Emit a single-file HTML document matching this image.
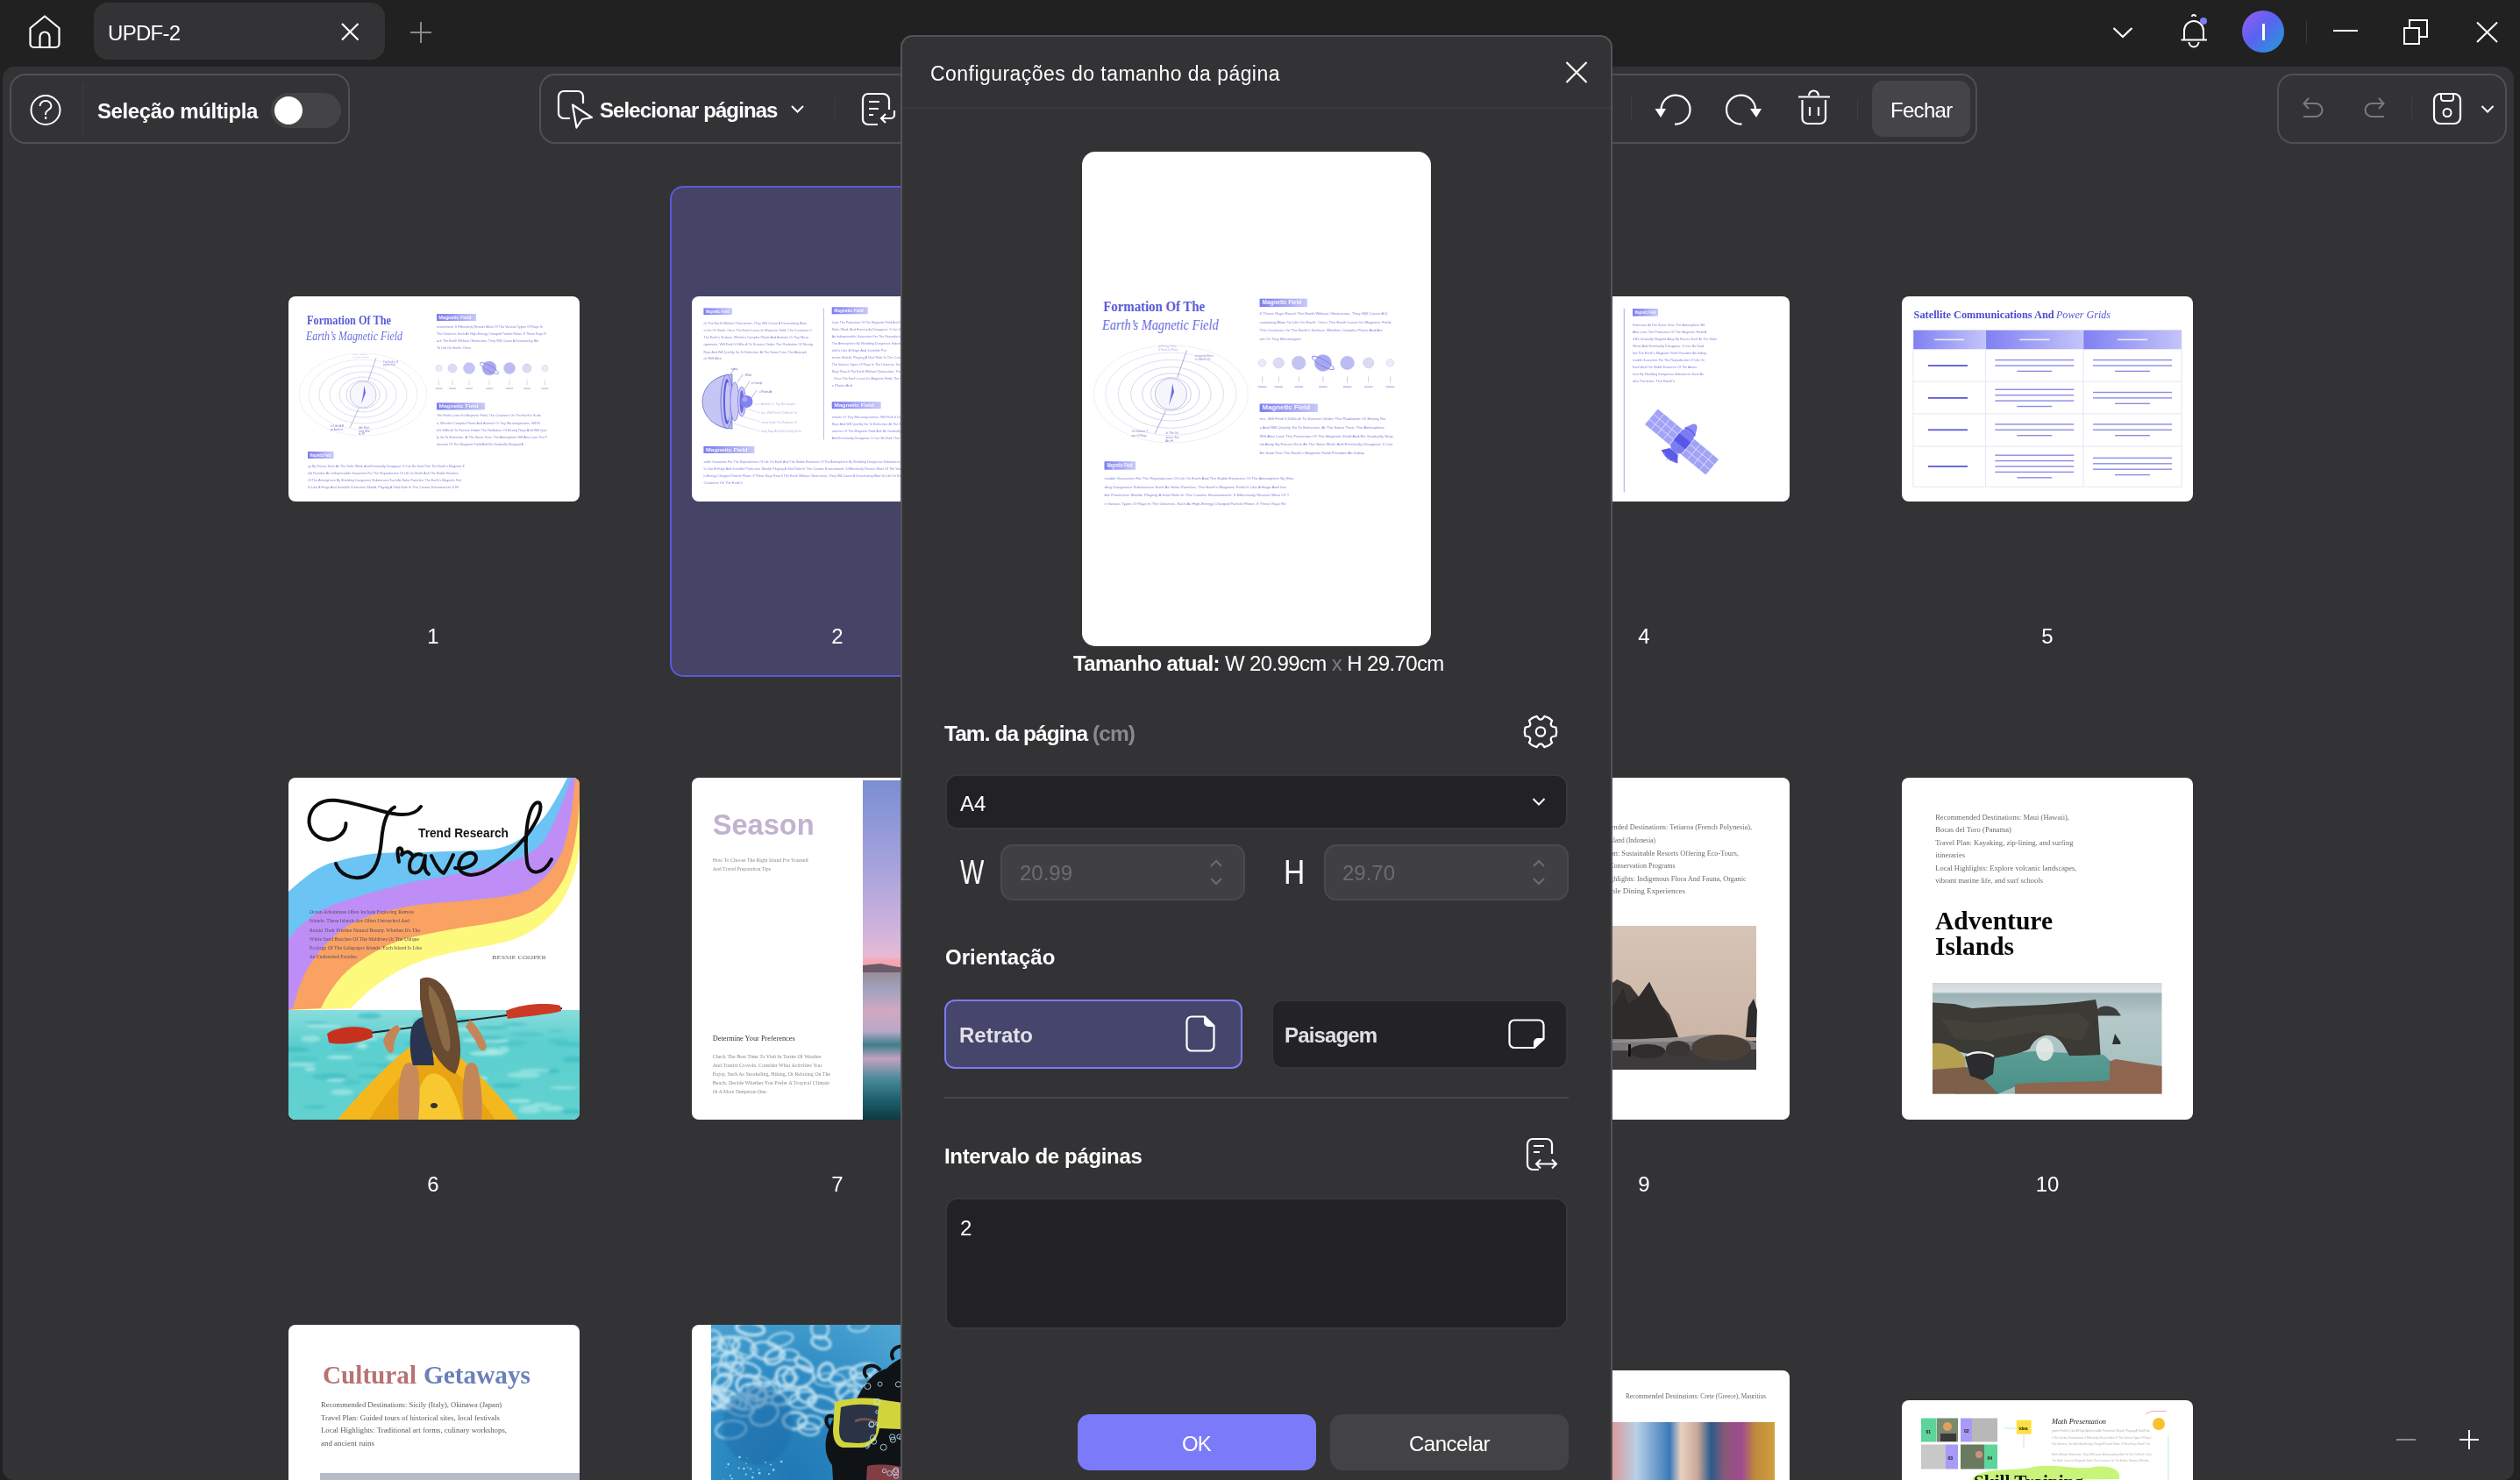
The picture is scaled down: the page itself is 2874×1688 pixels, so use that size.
<!DOCTYPE html>
<html><head><meta charset="utf-8">
<style>
*{margin:0;padding:0;box-sizing:border-box}
html,body{width:2874px;height:1688px;overflow:hidden;background:#212122;font-family:"Liberation Sans",sans-serif;color:#fff}
.a{position:absolute}
.t{position:absolute;white-space:nowrap;line-height:1;will-change:transform}
svg{position:absolute;overflow:visible}
.grp{position:absolute;border:2px solid #505052;border-radius:18px;background:#333235}
.pg{position:absolute;background:#fff;border-radius:8px;overflow:hidden}
.num{position:absolute;width:100px;text-align:center;font-size:24px;line-height:1;color:#fff}
</style></head><body>
<!-- title bar -->
<div class="a" style="left:0;top:0;width:2874px;height:76px;background:#212122"></div>
<!-- home icon -->
<svg style="left:0;top:0" width="120" height="76"><path d="M34.5 32 L51 18.5 L67.5 32 V50 a4 4 0 0 1 -4 4 H38.5 a4 4 0 0 1 -4 -4 Z" fill="none" stroke="#fff" stroke-width="2.2" stroke-linejoin="round"/><path d="M45.5 53 V42 a5.5 5.5 0 0 1 11 0 V53" fill="none" stroke="#fff" stroke-width="2.2"/></svg>
<!-- tab -->
<div class="a" style="left:107px;top:3px;width:332px;height:65px;background:#333335;border-radius:16px"></div>
<div class="t" id="tx-updf" style="left:123px;top:26px;font-size:24px;letter-spacing:-0.7px">UPDF-2</div>
<svg style="left:0;top:0" width="10" height="10"><path d="M390 27 L408.5 45.5 M408.5 27 L390 45.5" stroke="#fff" stroke-width="2.2"/></svg>
<svg style="left:0;top:0" width="10" height="10"><path d="M480 25 V49 M468 37 H492" stroke="#8a8a8a" stroke-width="2"/></svg>
<!-- right title bar -->
<svg style="left:0;top:0" width="10" height="10"><path d="M2410.5 32 L2421 42 L2431.5 32" fill="none" stroke="#fff" stroke-width="2.2"/></svg>
<svg style="left:0;top:0" width="10" height="10"><path d="M2491 45 V35 a11 11 0 0 1 22 0 V45 M2487.5 45.5 H2517 M2496.5 48 a5.5 5.5 0 0 0 11 0 M2500 19 a2 2 0 0 1 4 0" fill="none" stroke="#fff" stroke-width="2"/><circle cx="2513" cy="24" r="4" fill="#7b7bf5"/></svg>
<div class="a" style="left:2557px;top:12px;width:48px;height:48px;border-radius:50%;background:linear-gradient(135deg,#9b5cf6 0%,#5b62f0 45%,#1e9fd6 100%)"></div>
<div class="a" style="left:2580px;top:27px;width:2.5px;height:19px;background:#fff"></div>
<div class="a" style="left:2629.5px;top:24px;width:1px;height:25px;background:#3a3a3a"></div>
<svg style="left:0;top:0" width="10" height="10"><path d="M2661 35 H2689" stroke="#fff" stroke-width="2"/><path d="M2742 32 H2759 V50 H2742 Z M2748 32 V23 H2768 V42 H2759" fill="none" stroke="#fff" stroke-width="2"/><path d="M2825 25.5 L2848 48 M2848 25.5 L2825 48" stroke="#fff" stroke-width="2"/></svg>

<!-- content area -->
<div class="a" style="left:2.5px;top:76px;width:2864.5px;height:1612px;background:#333235;border-radius:14px 14px 12px 12px"></div>

<!-- toolbar group 1 -->
<div class="grp" style="left:11px;top:84px;width:388px;height:80px"></div>
<svg style="left:0;top:0" width="10" height="10"><circle cx="52" cy="125.5" r="16.5" fill="none" stroke="#fff" stroke-width="2"/><path d="M45.5 121 a6.5 6 0 0 1 13 0 c0 4 -6.5 4.5 -6.5 8.5 V131" fill="none" stroke="#fff" stroke-width="2"/><rect x="51" y="133" width="2.2" height="3" fill="#fff"/></svg>
<div class="a" style="left:93.5px;top:95px;width:1px;height:59px;background:#3e3e40"></div>
<div class="t" id="tx-sel" style="left:111px;top:115px;font-size:24px;font-weight:bold;letter-spacing:-0.4px">Seleção múltipla</div>
<div class="a" style="left:309px;top:106px;width:80px;height:40px;border-radius:20px;background:#444446"></div>
<div class="a" style="left:313px;top:110px;width:32px;height:32px;border-radius:50%;background:#fff"></div>

<!-- toolbar group 2 -->
<div class="grp" style="left:615px;top:84px;width:1640px;height:80px"></div>
<svg style="left:0;top:0" width="10" height="10"><path d="M650 135 H643 a6 6 0 0 1 -6 -6 V110 a6 6 0 0 1 6 -6 H659 a6 6 0 0 1 6 6 V118" fill="none" stroke="#fff" stroke-width="2.2"/><path d="M653 119.5 L675 134 L664 136 L657.5 145.5 Z" fill="none" stroke="#fff" stroke-width="2.2" stroke-linejoin="round"/></svg>
<div class="t" id="tx-selpg" style="left:684px;top:114px;font-size:24px;font-weight:bold;letter-spacing:-0.9px">Selecionar páginas</div>
<svg style="left:0;top:0" width="10" height="10"><path d="M903 121 L909.5 127.5 L916 121" fill="none" stroke="#fff" stroke-width="2"/></svg>
<div class="a" style="left:951.5px;top:113px;width:1px;height:23px;background:#3e3e40"></div>
<svg style="left:0;top:0" width="10" height="10"><path d="M1001 142 H990 a6 6 0 0 1 -6 -6 V113 a6 6 0 0 1 6 -6 H1007 a7 7 0 0 1 7 7 V125" fill="none" stroke="#fff" stroke-width="2.2"/><path d="M991 116 H1003 M991 124 H1002 M991 131 H996" stroke="#fff" stroke-width="2.2"/><path d="M1020 126 V131 a4 4 0 0 1 -4 4 H1005 M1010 130 L1005 135 L1010 140" fill="none" stroke="#fff" stroke-width="2.2"/></svg>
<div class="a" style="left:1859.5px;top:111px;width:1px;height:25px;background:#3e3e40"></div>
<svg style="left:0;top:0" width="10" height="10">
<path d="M1894.5 125 A16.5 16.5 0 1 1 1910 141.5" fill="none" stroke="#fff" stroke-width="2.2"/><path d="M1887.5 124 H1900 L1894 134 Z" fill="#fff"/>
<path d="M2002 125 A16.5 16.5 0 1 0 1986.5 141.5" fill="none" stroke="#fff" stroke-width="2.2"/><path d="M1996 124 H2009 L2003 134 Z" fill="#fff"/>
<path d="M2051 110.5 H2087 M2063 109 a5.5 5.5 0 0 1 11 0" fill="none" stroke="#fff" stroke-width="2.2"/><path d="M2055.5 114 V135 a6 6 0 0 0 6 6 H2076 a6 6 0 0 0 6 -6 V114" fill="none" stroke="#fff" stroke-width="2.2"/><path d="M2064 122 V132 M2074 122 V132" stroke="#fff" stroke-width="2.2"/>
</svg>
<div class="a" style="left:2118px;top:112px;width:1px;height:24px;background:#3e3e40"></div>
<div class="a" style="left:2135px;top:92px;width:112px;height:64px;border-radius:13px;background:#454547"></div>
<div class="t" id="tx-fechar" style="left:2156px;top:114px;font-size:24px;letter-spacing:-0.7px">Fechar</div>

<!-- toolbar group 3 -->
<div class="grp" style="left:2597px;top:84px;width:262px;height:80px"></div>
<svg style="left:0;top:0" width="10" height="10">
<path d="M2627 133 H2641 a7.5 7.5 0 0 0 0 -15 H2628 M2633 112 L2627.5 118 L2633 124" fill="none" stroke="#7a7a7c" stroke-width="2"/>
<path d="M2719 133 H2705 a7.5 7.5 0 0 1 0 -15 H2718 M2713 112 L2718.5 118 L2713 124" fill="none" stroke="#7a7a7c" stroke-width="2"/>
<rect x="2776" y="107" width="30" height="34" rx="7" fill="none" stroke="#fff" stroke-width="2.2"/><path d="M2784 107.5 V112 a3 3 0 0 0 3 3 H2795 a3 3 0 0 0 3 -3 V107.5" fill="none" stroke="#fff" stroke-width="2"/><circle cx="2791" cy="128.5" r="4.5" fill="none" stroke="#fff" stroke-width="2"/>
<path d="M2830.5 121 L2837 127.5 L2843.5 121" fill="none" stroke="#fff" stroke-width="2"/>
</svg>
<div class="a" style="left:2750px;top:111px;width:1px;height:24px;background:#3e3e40"></div>

<!-- zoom controls -->
<svg style="left:0;top:0" width="10" height="10"><path d="M2733 1642 H2755" stroke="#8a8a8a" stroke-width="2"/><path d="M2805 1642 H2827 M2816 1631 V1653" stroke="#fff" stroke-width="2"/></svg>

<!-- THUMBNAILS -->
<div id="thumbs">
<div class="a" style="left:764px;top:212px;width:382px;height:560px;border-radius:15px;background:#454466;border:2.5px solid #5a5ad8"></div>
<div class="pg" id="p1" style="left:329px;top:338px;width:332px;height:234px"><svg width="332" height="234" viewBox="0 0 332 234" style="left:0;top:0" ><text x="21" y="32.4" font-family="Liberation Serif" font-weight="bold" font-size="13.6" fill="#5a5ad9" textLength="96" lengthAdjust="spacingAndGlyphs">Formation Of The</text><text x="20" y="49.8" font-family="Liberation Serif" font-style="italic" font-size="13.6" fill="#6c6ce0" textLength="110" lengthAdjust="spacingAndGlyphs">Earth’s Magnetic Field</text><g fill="none" stroke="#b4b4dc" stroke-width="0.55"><ellipse cx="85" cy="112" rx="73" ry="47" opacity="0.35"/><ellipse cx="85" cy="112" rx="62" ry="40" opacity="0.5"/><ellipse cx="85" cy="112" rx="50" ry="33" opacity="0.7"/><ellipse cx="85" cy="112" rx="38" ry="26" opacity="0.8"/><ellipse cx="85" cy="112" rx="27" ry="20" opacity="0.9"/><ellipse cx="85" cy="112" rx="19" ry="16" opacity="1"/></g><circle cx="85" cy="112" r="15" fill="#f6f6fd" stroke="#a8a8dc" stroke-width="0.6"/><path d="M86.5 102 L88 110 L83 123 L85 113 Z" fill="#6a6ae0"/><path d="M91 96 L100 70 M80 128 L70 150" stroke="#8888cc" stroke-width="0.6" fill="none"/><text x="108.0" y="75.95" font-family="Liberation Sans" font-size="2.64" fill="#8888d8" opacity="1.0" textLength="17.0" lengthAdjust="spacingAndGlyphs">The Earth's M</text><text x="108.0" y="79.45" font-family="Liberation Sans" font-size="2.64" fill="#8888d8" opacity="1.0" textLength="14.0" lengthAdjust="spacingAndGlyphs">gnetic Fiel</text><text x="48.0" y="148.95" font-family="Liberation Sans" font-size="2.64" fill="#7878c8" opacity="1.0" textLength="15.0" lengthAdjust="spacingAndGlyphs">Is Like A H</text><text x="48.0" y="152.95" font-family="Liberation Sans" font-size="2.64" fill="#7878c8" opacity="1.0" textLength="14.0" lengthAdjust="spacingAndGlyphs">ge And Invi</text><text x="80.0" y="150.95" font-family="Liberation Sans" font-size="2.64" fill="#7878c8" opacity="1.0" textLength="12.0" lengthAdjust="spacingAndGlyphs">ible Prot</text><text x="80.0" y="154.95" font-family="Liberation Sans" font-size="2.64" fill="#7878c8" opacity="1.0" textLength="13.0" lengthAdjust="spacingAndGlyphs">ctive Shie</text><text x="80.0" y="158.45" font-family="Liberation Sans" font-size="2.64" fill="#7878c8" opacity="1.0" textLength="7.0" lengthAdjust="spacingAndGlyphs">d, Pl</text><text x="73.0" y="66.86" font-family="Liberation Sans" font-size="2.40" fill="#b0b0e8" opacity="1.0" textLength="17.0" lengthAdjust="spacingAndGlyphs">ying A Vital Ro</text><text x="73.0" y="70.36" font-family="Liberation Sans" font-size="2.40" fill="#b0b0e8" opacity="1.0" textLength="19.0" lengthAdjust="spacingAndGlyphs">e In The Cosmic</text><defs><linearGradient id="lg347712782"><stop offset="0" stop-color="#7c7cf0"/><stop offset="1" stop-color="#c8c8fa"/></linearGradient></defs><rect x="169" y="20" width="45" height="8" fill="url(#lg347712782)"/><text x="171.5" y="25.76" font-family="Liberation Sans" font-size="5.60" font-weight="bold" fill="#fff" opacity=".9" textLength="36.9" lengthAdjust="spacingAndGlyphs">Magnetic Field</text><text x="169.0" y="35.80" font-family="Liberation Sans" font-size="3.60" fill="#8282de" opacity="1.0" textLength="121.0" lengthAdjust="spacingAndGlyphs">nvironment. It Effectively Resists Most Of The Various Types Of Rays In</text><text x="169.0" y="44.00" font-family="Liberation Sans" font-size="3.60" fill="#8282de" opacity="1.0" textLength="125.0" lengthAdjust="spacingAndGlyphs">The Universe, Such As High-Energy Charged Particle Flows. If These Rays R</text><text x="169.0" y="51.90" font-family="Liberation Sans" font-size="3.60" fill="#8282de" opacity="1.0" textLength="116.0" lengthAdjust="spacingAndGlyphs">ach The Earth Without Obstruction, They Will Cause A Devastating Blo</text><text x="169.0" y="60.10" font-family="Liberation Sans" font-size="3.60" fill="#8282de" opacity="1.0" textLength="39.0" lengthAdjust="spacingAndGlyphs">To Life On Earth. Once</text><circle cx="171.5" cy="82" r="3.5" fill="#ececfa" stroke="#b8b8e8" stroke-width="0.4"/><rect x="171.2" y="95" width="0.6" height="6" fill="#c0c0e0"/><rect x="167.5" y="104.5" width="8" height="1.2" fill="#b8b8e4"/><circle cx="187" cy="82" r="5" fill="#dcdcf6" stroke="#b8b8e8" stroke-width="0.4"/><rect x="186.7" y="95" width="0.6" height="6" fill="#c0c0e0"/><rect x="183" y="104.5" width="8" height="1.2" fill="#b8b8e4"/><circle cx="206" cy="82" r="6.5" fill="#c4c4f4" stroke="#b8b8e8" stroke-width="0.4"/><rect x="205.7" y="95" width="0.6" height="6" fill="#c0c0e0"/><rect x="202" y="104.5" width="8" height="1.2" fill="#b8b8e4"/><circle cx="229" cy="82" r="8" fill="#a8a8f0" stroke="#b8b8e8" stroke-width="0.4"/><rect x="228.7" y="95" width="0.6" height="6" fill="#c0c0e0"/><rect x="225" y="104.5" width="8" height="1.2" fill="#b8b8e4"/><circle cx="252" cy="82" r="6.5" fill="#bcbcf2" stroke="#b8b8e8" stroke-width="0.4"/><rect x="251.7" y="95" width="0.6" height="6" fill="#c0c0e0"/><rect x="248" y="104.5" width="8" height="1.2" fill="#b8b8e4"/><circle cx="272" cy="82" r="5" fill="#dcdcf0" stroke="#b8b8e8" stroke-width="0.4"/><rect x="271.7" y="95" width="0.6" height="6" fill="#c0c0e0"/><rect x="268" y="104.5" width="8" height="1.2" fill="#b8b8e4"/><circle cx="292.5" cy="82" r="3.5" fill="#eeeefa" stroke="#b8b8e8" stroke-width="0.4"/><rect x="292.2" y="95" width="0.6" height="6" fill="#c0c0e0"/><rect x="288.5" y="104.5" width="8" height="1.2" fill="#b8b8e4"/><ellipse cx="229" cy="82" rx="12" ry="3" fill="none" stroke="#7c7ce8" stroke-width="0.7" transform="rotate(30 229 82)"/><defs><linearGradient id="lg161973069"><stop offset="0" stop-color="#7c7cf0"/><stop offset="1" stop-color="#c8c8fa"/></linearGradient></defs><rect x="169" y="121.4" width="55" height="8" fill="url(#lg161973069)"/><text x="171.5" y="127.16" font-family="Liberation Sans" font-size="5.60" font-weight="bold" fill="#fff" opacity=".9" textLength="45.1" lengthAdjust="spacingAndGlyphs">Magnetic Field</text><text x="169.0" y="137.30" font-family="Liberation Sans" font-size="3.60" fill="#8282de" opacity="1.0" textLength="119.0" lengthAdjust="spacingAndGlyphs">The Earth Loses Its Magnetic Field, The Creatures On The Earth's Surfa</text><text x="169.0" y="145.80" font-family="Liberation Sans" font-size="3.60" fill="#8282de" opacity="1.0" textLength="118.0" lengthAdjust="spacingAndGlyphs">e, Whether Complex Plants And Animals Or Tiny Microorganisms, Will Fi</text><text x="169.0" y="153.90" font-family="Liberation Sans" font-size="3.60" fill="#8282de" opacity="1.0" textLength="126.0" lengthAdjust="spacingAndGlyphs">d It Difficult To Survive Under The Radiation Of Strong Rays And Will Quic</text><text x="169.0" y="161.90" font-family="Liberation Sans" font-size="3.60" fill="#8282de" opacity="1.0" textLength="126.0" lengthAdjust="spacingAndGlyphs">ly Go To Extinction. At The Same Time, The Atmosphere Will Also Lose The P</text><text x="169.0" y="169.80" font-family="Liberation Sans" font-size="3.60" fill="#8282de" opacity="1.0" textLength="99.0" lengthAdjust="spacingAndGlyphs">otection Of The Magnetic Field And Be Gradually Stripped A</text><defs><linearGradient id="lg423938499"><stop offset="0" stop-color="#7c7cf0"/><stop offset="1" stop-color="#c8c8fa"/></linearGradient></defs><rect x="22" y="177" width="29.5" height="8" fill="url(#lg423938499)"/><text x="24.5" y="182.76" font-family="Liberation Sans" font-size="5.60" font-weight="bold" fill="#fff" opacity=".9" textLength="24.2" lengthAdjust="spacingAndGlyphs">Magnetic Field</text><text x="22.0" y="194.80" font-family="Liberation Sans" font-size="3.60" fill="#8282de" opacity="1.0" textLength="179.0" lengthAdjust="spacingAndGlyphs">ay By Forces Such As The Solar Wind, And Eventually Disappear. It Can Be Said That The Earth's Magnetic F</text><text x="22.0" y="202.90" font-family="Liberation Sans" font-size="3.60" fill="#8282de" opacity="1.0" textLength="172.0" lengthAdjust="spacingAndGlyphs">eld Provides An Indispensable Guarantee For The Reproduction Of Life On Earth And The Stable Existenc</text><text x="22.0" y="210.90" font-family="Liberation Sans" font-size="3.60" fill="#8282de" opacity="1.0" textLength="175.0" lengthAdjust="spacingAndGlyphs">Of The Atmosphere By Shielding Dangerous Substances Such As Solar Particles. The Earth's Magnetic Fiel</text><text x="22.0" y="219.00" font-family="Liberation Sans" font-size="3.60" fill="#8282de" opacity="1.0" textLength="172.0" lengthAdjust="spacingAndGlyphs">Is Like A Huge And Invisible Protective Shield, Playing A Vital Role In The Cosmic Environment. It Ef</text></svg></div>
<div class="pg" id="p2" style="left:789px;top:338px;width:332px;height:234px"><svg width="332" height="234" viewBox="0 0 332 234" style="left:0;top:0" ><defs><linearGradient id="lg881836553"><stop offset="0" stop-color="#7c7cf0"/><stop offset="1" stop-color="#c8c8fa"/></linearGradient></defs><rect x="13.4" y="13.4" width="32.4" height="7.6" fill="url(#lg881836553)"/><text x="15.9" y="18.87" font-family="Liberation Sans" font-size="5.32" font-weight="bold" fill="#fff" opacity=".9" textLength="26.6" lengthAdjust="spacingAndGlyphs">Magnetic Field</text><text x="13.4" y="32.10" font-family="Liberation Sans" font-size="3.60" fill="#8484e0" opacity="1.0" textLength="117.6" lengthAdjust="spacingAndGlyphs">ch The Earth Without Obstruction, They Will Cause A Devastating Blow</text><text x="13.4" y="40.00" font-family="Liberation Sans" font-size="3.60" fill="#8484e0" opacity="1.0" textLength="123.6" lengthAdjust="spacingAndGlyphs">o Life On Earth. Once The Earth Loses Its Magnetic Field, The Creatures O</text><text x="13.4" y="48.30" font-family="Liberation Sans" font-size="3.60" fill="#8484e0" opacity="1.0" textLength="119.6" lengthAdjust="spacingAndGlyphs">The Earth's Surface, Whether Complex Plants And Animals Or Tiny Micro</text><text x="13.4" y="56.30" font-family="Liberation Sans" font-size="3.60" fill="#8484e0" opacity="1.0" textLength="124.6" lengthAdjust="spacingAndGlyphs">rganisms, Will Find It Difficult To Survive Under The Radiation Of Strong</text><text x="13.4" y="64.50" font-family="Liberation Sans" font-size="3.60" fill="#8484e0" opacity="1.0" textLength="117.6" lengthAdjust="spacingAndGlyphs">Rays And Will Quickly Go To Extinction. At The Same Time, The Atmosph</text><text x="13.4" y="72.40" font-family="Liberation Sans" font-size="3.60" fill="#8484e0" opacity="1.0" textLength="20.6" lengthAdjust="spacingAndGlyphs">re Will Also</text><rect x="150.2" y="13.4" width="0.6" height="150" fill="#9a9ad8"/><defs><linearGradient id="lg575398922"><stop offset="0" stop-color="#7c7cf0"/><stop offset="1" stop-color="#c8c8fa"/></linearGradient></defs><rect x="159.7" y="12.3" width="41" height="8" fill="url(#lg575398922)"/><text x="162.2" y="18.06" font-family="Liberation Sans" font-size="5.60" font-weight="bold" fill="#fff" opacity=".9" textLength="33.6" lengthAdjust="spacingAndGlyphs">Magnetic Field</text><text x="159.7" y="31.00" font-family="Liberation Sans" font-size="3.60" fill="#8484e0" opacity="1.0" textLength="158.3" lengthAdjust="spacingAndGlyphs">Lose The Protection Of The Magnetic Field And Be Gradually Stripped Away By Forces Such As Th</text><text x="159.7" y="39.10" font-family="Liberation Sans" font-size="3.60" fill="#8484e0" opacity="1.0" textLength="160.3" lengthAdjust="spacingAndGlyphs">Solar Wind, And Eventually Disappear. It Can Be Said That The Earth's Magnetic Field Provides</text><text x="159.7" y="47.10" font-family="Liberation Sans" font-size="3.60" fill="#8484e0" opacity="1.0" textLength="156.3" lengthAdjust="spacingAndGlyphs">An Indispensable Guarantee For The Reproduction Of Life On Earth And The Stable Existence Of</text><text x="159.7" y="55.10" font-family="Liberation Sans" font-size="3.60" fill="#8484e0" opacity="1.0" textLength="162.3" lengthAdjust="spacingAndGlyphs">The Atmosphere By Shielding Dangerous Substances Such As Solar Particles. The Earth's Magnetic</text><text x="159.7" y="63.20" font-family="Liberation Sans" font-size="3.60" fill="#8484e0" opacity="1.0" textLength="62.3" lengthAdjust="spacingAndGlyphs">eld Is Like A Huge And Invisible Pro</text><text x="159.7" y="71.20" font-family="Liberation Sans" font-size="3.60" fill="#8484e0" opacity="1.0" textLength="158.3" lengthAdjust="spacingAndGlyphs">ective Shield, Playing A Vital Role In The Cosmic Environment. It Effectively Resists Most Of</text><text x="159.7" y="79.20" font-family="Liberation Sans" font-size="3.60" fill="#8484e0" opacity="1.0" textLength="161.3" lengthAdjust="spacingAndGlyphs">The Various Types Of Rays In The Universe, Such As High-Energy Charged Particle Flows. If These</text><text x="159.7" y="87.30" font-family="Liberation Sans" font-size="3.60" fill="#8484e0" opacity="1.0" textLength="157.3" lengthAdjust="spacingAndGlyphs">Rays Reach The Earth Without Obstruction, They Will Cause A Devastating Blow To Life On Eart</text><text x="159.7" y="95.30" font-family="Liberation Sans" font-size="3.60" fill="#8484e0" opacity="1.0" textLength="160.3" lengthAdjust="spacingAndGlyphs">. Once The Earth Loses Its Magnetic Field, The Creatures On The Earth's Surface, Whether Compl</text><text x="159.7" y="103.30" font-family="Liberation Sans" font-size="3.60" fill="#8484e0" opacity="1.0" textLength="23.3" lengthAdjust="spacingAndGlyphs">x Plants And</text><defs><linearGradient id="lg101071364"><stop offset="0" stop-color="#7c7cf0"/><stop offset="1" stop-color="#c8c8fa"/></linearGradient></defs><rect x="159.7" y="120.2" width="56" height="8" fill="url(#lg101071364)"/><text x="162.2" y="125.96" font-family="Liberation Sans" font-size="5.60" font-weight="bold" fill="#fff" opacity=".9" textLength="45.9" lengthAdjust="spacingAndGlyphs">Magnetic Field</text><text x="159.7" y="138.80" font-family="Liberation Sans" font-size="3.60" fill="#8484e0" opacity="1.0" textLength="160.3" lengthAdjust="spacingAndGlyphs">nimals Or Tiny Microorganisms, Will Find It Difficult To Survive Under The Radiation Of Strong</text><text x="159.7" y="146.80" font-family="Liberation Sans" font-size="3.60" fill="#8484e0" opacity="1.0" textLength="158.3" lengthAdjust="spacingAndGlyphs">Rays And Will Quickly Go To Extinction. At The Same Time, The Atmosphere Will Also Lose The P</text><text x="159.7" y="155.00" font-family="Liberation Sans" font-size="3.60" fill="#8484e0" opacity="1.0" textLength="162.3" lengthAdjust="spacingAndGlyphs">otection Of The Magnetic Field And Be Gradually Stripped Away By Forces Such As The Solar Wind,</text><text x="159.7" y="162.90" font-family="Liberation Sans" font-size="3.60" fill="#8484e0" opacity="1.0" textLength="156.3" lengthAdjust="spacingAndGlyphs">And Eventually Disappear. It Can Be Said That The Earth's Magnetic Field Provides An Indispe</text><defs><linearGradient id="lg392655486"><stop offset="0" stop-color="#7c7cf0"/><stop offset="1" stop-color="#c8c8fa"/></linearGradient></defs><rect x="13.4" y="171" width="58" height="8" fill="url(#lg392655486)"/><text x="15.9" y="176.76" font-family="Liberation Sans" font-size="5.60" font-weight="bold" fill="#fff" opacity=".9" textLength="47.6" lengthAdjust="spacingAndGlyphs">Magnetic Field</text><text x="13.4" y="189.80" font-family="Liberation Sans" font-size="3.60" fill="#8484e0" opacity="1.0" textLength="304.6" lengthAdjust="spacingAndGlyphs">sable Guarantee For The Reproduction Of Life On Earth And The Stable Existence Of The Atmosphere By Shielding Dangerous Substances Such As Solar Particles. The Earth's Magnetic Fie</text><text x="13.4" y="197.80" font-family="Liberation Sans" font-size="3.60" fill="#8484e0" opacity="1.0" textLength="306.6" lengthAdjust="spacingAndGlyphs">Is Like A Huge And Invisible Protective Shield, Playing A Vital Role In The Cosmic Environment. It Effectively Resists Most Of The Various Types Of Rays In The Universe, Such As Hi</text><text x="13.4" y="205.90" font-family="Liberation Sans" font-size="3.60" fill="#8484e0" opacity="1.0" textLength="304.6" lengthAdjust="spacingAndGlyphs">h-Energy Charged Particle Flows. If These Rays Reach The Earth Without Obstruction, They Will Cause A Devastating Blow To Life On Earth. Once The Earth Loses Its Magnetic Field, Th</text><text x="13.4" y="214.00" font-family="Liberation Sans" font-size="3.60" fill="#8484e0" opacity="1.0" textLength="44.6" lengthAdjust="spacingAndGlyphs">Creatures On The Earth's</text><path d="M46 89 A34 31 0 0 0 46 151 Z" fill="#c6c6f4" stroke="#5656c8" stroke-width="0.7"/><ellipse cx="40" cy="120" rx="7" ry="31" fill="#bdbdf2" stroke="#5a5ad0" stroke-width="0.7"/><ellipse cx="40" cy="120" rx="4" ry="26" fill="#6060e0"/><ellipse cx="41" cy="120" rx="3" ry="22" fill="#c8c8f6"/><ellipse cx="49" cy="120" rx="5" ry="22" fill="#cacaf6" stroke="#5a5ad0" stroke-width="0.6"/><ellipse cx="57" cy="120" rx="4.5" ry="17" fill="#d0d0f8" stroke="#5a5ad0" stroke-width="0.6"/><ellipse cx="57" cy="120" rx="2.5" ry="13" fill="#7070e8"/><circle cx="62.5" cy="120" r="7" fill="#8282f2"/><circle cx="60.5" cy="117.5" r="3" fill="#a6a6f8"/><path d="M44 89 L49 82 M52 98 L58 89 M60 106 L66 97 M68 116 L74 107" stroke="#7070b0" stroke-width="0.5"/><text x="45.0" y="84.04" font-family="Liberation Sans" font-size="2.88" fill="#6c6cc0" opacity="1.0" textLength="8.0" lengthAdjust="spacingAndGlyphs">urfac</text><text x="59.0" y="90.54" font-family="Liberation Sans" font-size="2.88" fill="#6c6cc0" opacity="1.0" textLength="9.0" lengthAdjust="spacingAndGlyphs">, Whet</text><text x="68.0" y="99.54" font-family="Liberation Sans" font-size="2.88" fill="#6c6cc0" opacity="1.0" textLength="12.0" lengthAdjust="spacingAndGlyphs">er Compl</text><text x="77.0" y="109.54" font-family="Liberation Sans" font-size="2.88" fill="#6c6cc0" opacity="1.0" textLength="15.0" lengthAdjust="spacingAndGlyphs">x Plants An</text><path d="M70 123 L78 123 M62 128 L78 133 M54 136 L78 143 M48 145 L78 154" stroke="#b0b0d8" stroke-width="0.4"/><text x="79.0" y="123.54" font-family="Liberation Sans" font-size="2.88" fill="#b4b4e4" opacity="1.0" textLength="39.0" lengthAdjust="spacingAndGlyphs">Animals Or Tiny Microorgani</text><text x="79.0" y="134.04" font-family="Liberation Sans" font-size="2.88" fill="#b4b4e4" opacity="1.0" textLength="41.0" lengthAdjust="spacingAndGlyphs">ms, Will Find It Difficult To</text><text x="79.0" y="144.54" font-family="Liberation Sans" font-size="2.88" fill="#b4b4e4" opacity="1.0" textLength="41.0" lengthAdjust="spacingAndGlyphs">urvive Under The Radiation Of</text><text x="79.0" y="155.04" font-family="Liberation Sans" font-size="2.88" fill="#b4b4e4" opacity="1.0" textLength="46.0" lengthAdjust="spacingAndGlyphs">trong Rays And Will Quickly Go To</text></svg></div>
<div class="pg" id="p4" style="left:1709px;top:338px;width:332px;height:234px"><svg width="332" height="234" viewBox="0 0 332 234" style="left:0;top:0" ><rect x="142.8" y="14" width="0.8" height="209.5" fill="#9090e0"/><defs><linearGradient id="lg625763863"><stop offset="0" stop-color="#7c7cf0"/><stop offset="1" stop-color="#c8c8fa"/></linearGradient></defs><rect x="153" y="14" width="29" height="8.6" fill="url(#lg625763863)"/><text x="155.5" y="20.19" font-family="Liberation Sans" font-size="6.02" font-weight="bold" fill="#fff" opacity=".9" textLength="23.8" lengthAdjust="spacingAndGlyphs">Magnetic Field</text><text x="153.0" y="34.30" font-family="Liberation Sans" font-size="3.60" fill="#8282de" opacity="1.0" textLength="82.0" lengthAdjust="spacingAndGlyphs">Extinction. At The Same Time, The Atmosphere Wil</text><text x="153.0" y="42.30" font-family="Liberation Sans" font-size="3.60" fill="#8282de" opacity="1.0" textLength="84.0" lengthAdjust="spacingAndGlyphs">Also Lose The Protection Of The Magnetic Field A</text><text x="153.0" y="50.30" font-family="Liberation Sans" font-size="3.60" fill="#8282de" opacity="1.0" textLength="96.0" lengthAdjust="spacingAndGlyphs">d Be Gradually Stripped Away By Forces Such As The Solar</text><text x="153.0" y="58.30" font-family="Liberation Sans" font-size="3.60" fill="#8282de" opacity="1.0" textLength="81.0" lengthAdjust="spacingAndGlyphs">Wind, And Eventually Disappear. It Can Be Said</text><text x="153.0" y="66.30" font-family="Liberation Sans" font-size="3.60" fill="#8282de" opacity="1.0" textLength="84.0" lengthAdjust="spacingAndGlyphs">hat The Earth's Magnetic Field Provides An Indisp</text><text x="153.0" y="74.30" font-family="Liberation Sans" font-size="3.60" fill="#8282de" opacity="1.0" textLength="82.0" lengthAdjust="spacingAndGlyphs">nsable Guarantee For The Reproduction Of Life On</text><text x="153.0" y="82.30" font-family="Liberation Sans" font-size="3.60" fill="#8282de" opacity="1.0" textLength="73.0" lengthAdjust="spacingAndGlyphs">Earth And The Stable Existence Of The Atmos</text><text x="153.0" y="90.30" font-family="Liberation Sans" font-size="3.60" fill="#8282de" opacity="1.0" textLength="81.0" lengthAdjust="spacingAndGlyphs">here By Shielding Dangerous Substances Such As</text><text x="153.0" y="98.30" font-family="Liberation Sans" font-size="3.60" fill="#8282de" opacity="1.0" textLength="48.0" lengthAdjust="spacingAndGlyphs">olar Particles. The Earth's</text><g transform="translate(209 166) rotate(39.7)"><rect x="-45" y="-11.5" width="90" height="23" fill="#a2a2f6"/><path d="M-36 -11.5 V11.5 M-27 -11.5 V11.5 M-18 -11.5 V11.5 M-9 -11.5 V11.5 M0 -11.5 V11.5 M9 -11.5 V11.5 M18 -11.5 V11.5 M27 -11.5 V11.5 M36 -11.5 V11.5 M-45 -3.8 H45 M-45 3.8 H45" stroke="#e4e4fd" stroke-width="0.8"/></g><g transform="translate(209 166) rotate(-50.3)"><rect x="-14" y="-8" width="30" height="16" rx="6" fill="#7c7cf2"/><rect x="-4" y="-8.5" width="10" height="17" fill="#5858e6"/><path d="M14 -8 L24 -3 Q27 0 24 3 L14 8 Z" fill="#8a8af4"/><path d="M15 -7 Q18 0 15 7" stroke="#5a5ae6" stroke-width="1.4" fill="none"/><path d="M-14 -6 L-22 -12 Q-28 0 -22 12 L-14 6 Z" fill="#5c5ce8"/><path d="M-22 -8 L-25 -3 M-22 8 L-25 3 M-23 0 H-27" stroke="#8c8cf4" stroke-width="0.8"/></g></svg></div>
<div class="pg" id="p5" style="left:2169px;top:338px;width:332px;height:234px"><svg width="332" height="234" viewBox="0 0 332 234" style="left:0;top:0" ><text x="13.6" y="24.7" font-family="Liberation Serif" font-weight="bold" font-size="12.8" fill="#4c4cd4" textLength="160" lengthAdjust="spacingAndGlyphs">Satellite Communications And</text><text x="176" y="24.7" font-family="Liberation Serif" font-style="italic" font-size="12.8" fill="#5656d8" textLength="62" lengthAdjust="spacingAndGlyphs">Power Grids</text><defs><linearGradient id="th"><stop offset="0" stop-color="#8080f2"/><stop offset="1" stop-color="#c4c4fa"/></linearGradient></defs><rect x="13" y="38.5" width="82.6" height="21.8" fill="url(#th)"/><rect x="37.3" y="48.6" width="34" height="1.6" fill="#fff" opacity=".8"/><rect x="95.6" y="38.5" width="111.4" height="21.8" fill="url(#th)"/><rect x="134.3" y="48.6" width="34" height="1.6" fill="#fff" opacity=".8"/><rect x="207" y="38.5" width="112" height="21.8" fill="url(#th)"/><rect x="246.0" y="48.6" width="34" height="1.6" fill="#fff" opacity=".8"/><g stroke="#d4d4f0" stroke-width="0.6" fill="none"><rect x="13" y="38.5" width="306" height="178.6"/><path d="M95.6 38.5 V217 M207 38.5 V217 M13 97.1 H319 M13 133.9 H319 M13 171.1 H319"/></g><rect x="30" y="78.1" width="45" height="1.8" fill="#5a5ad8"/><rect x="106.30000000000001" y="71.89999999999999" width="90" height="1.4" fill="#8c8ce6"/><rect x="106.30000000000001" y="78.3" width="90" height="1.4" fill="#8c8ce6"/><rect x="131.3" y="84.7" width="40" height="1.4" fill="#8c8ce6"/><rect x="218.0" y="71.89999999999999" width="90" height="1.4" fill="#8c8ce6"/><rect x="218.0" y="78.3" width="90" height="1.4" fill="#8c8ce6"/><rect x="243.0" y="84.7" width="40" height="1.4" fill="#8c8ce6"/><rect x="30" y="115.0" width="45" height="1.8" fill="#5a5ad8"/><rect x="106.30000000000001" y="105.60000000000001" width="90" height="1.4" fill="#8c8ce6"/><rect x="106.30000000000001" y="112.0" width="90" height="1.4" fill="#8c8ce6"/><rect x="106.30000000000001" y="118.4" width="90" height="1.4" fill="#8c8ce6"/><rect x="131.3" y="124.8" width="40" height="1.4" fill="#8c8ce6"/><rect x="218.0" y="108.8" width="90" height="1.4" fill="#8c8ce6"/><rect x="218.0" y="115.2" width="90" height="1.4" fill="#8c8ce6"/><rect x="243.0" y="121.60000000000001" width="40" height="1.4" fill="#8c8ce6"/><rect x="30" y="151.4" width="45" height="1.8" fill="#5a5ad8"/><rect x="106.30000000000001" y="145.20000000000002" width="90" height="1.4" fill="#8c8ce6"/><rect x="106.30000000000001" y="151.60000000000002" width="90" height="1.4" fill="#8c8ce6"/><rect x="131.3" y="158.00000000000003" width="40" height="1.4" fill="#8c8ce6"/><rect x="218.0" y="145.20000000000002" width="90" height="1.4" fill="#8c8ce6"/><rect x="218.0" y="151.60000000000002" width="90" height="1.4" fill="#8c8ce6"/><rect x="243.0" y="158.00000000000003" width="40" height="1.4" fill="#8c8ce6"/><rect x="30" y="193.1" width="45" height="1.8" fill="#5a5ad8"/><rect x="106.30000000000001" y="180.5" width="90" height="1.4" fill="#8c8ce6"/><rect x="106.30000000000001" y="186.9" width="90" height="1.4" fill="#8c8ce6"/><rect x="106.30000000000001" y="193.3" width="90" height="1.4" fill="#8c8ce6"/><rect x="106.30000000000001" y="199.70000000000002" width="90" height="1.4" fill="#8c8ce6"/><rect x="131.3" y="206.10000000000002" width="40" height="1.4" fill="#8c8ce6"/><rect x="218.0" y="183.70000000000002" width="90" height="1.4" fill="#8c8ce6"/><rect x="218.0" y="190.10000000000002" width="90" height="1.4" fill="#8c8ce6"/><rect x="218.0" y="196.5" width="90" height="1.4" fill="#8c8ce6"/><rect x="243.0" y="202.9" width="40" height="1.4" fill="#8c8ce6"/></svg></div>
<div class="num" style="left:444px;top:714px">1</div>
<div class="num" style="left:905px;top:714px">2</div>
<div class="num" style="left:1825px;top:714px">4</div>
<div class="num" style="left:2285px;top:714px">5</div>
<div class="pg" id="p6" style="left:329px;top:887px;width:332px;height:390px"><svg width="332" height="390" viewBox="0 0 332 390" style="left:0;top:0" ><path d="M0 130 C20 112 35 100 53 96 C75 90 90 87 105 86 C140 85 165 85 184 84 C205 83 225 83 237 81 C252 78 262 72 270 66 C282 56 290 48 296 39 C305 25 312 12 318 0 L332 0 L332 265 L0 265 Z" fill="#6cc4f4"/><path d="M0 184 C15 165 35 150 53 144 C90 132 130 120 158 116 C195 110 222 104 237 100 C250 96 258 94 263 92 C275 86 284 80 290 74 C300 60 312 30 323 0 L332 0 L332 265 L0 265 Z" fill="#be8ef6"/><path d="M5 263 C10 245 16 225 26 211 C40 190 58 172 79 163 C105 152 135 146 158 144 C200 140 240 138 263 132 C285 125 300 108 311 87 C318 70 324 40 327 0 L332 0 L332 265 L0 265 Z" fill="#f9a262"/><path d="M37 263 C48 240 62 222 79 211 C95 200 112 190 132 184 C160 177 190 172 211 169 C240 165 262 160 277 153 C295 144 308 128 316 111 C325 90 330 60 332 26 L332 0 L332 265 L0 265 Z" fill="#fdf97c"/><path d="M71 263 C85 248 100 235 119 224 C138 213 160 205 184 200 C215 193 245 190 263 182 C285 173 300 158 311 142 C322 125 330 100 332 79 L332 0 L332 265 L0 265 Z" fill="#ffffff"/><path d="M332 79 L332 265 L71 265 Z" fill="#fff" opacity="0"/><defs><linearGradient id="sea6" x1="0" y1="0" x2="0" y2="1"><stop offset="0" stop-color="#8adcdc"/><stop offset=".3" stop-color="#5ccfd0"/><stop offset="1" stop-color="#62d2cf"/></linearGradient><filter id="bl6"><feGaussianBlur stdDeviation="1.5"/></filter><clipPath id="cp6"><rect x="0" y="265" width="332" height="125"/></clipPath></defs><rect x="0" y="265" width="332" height="125" fill="url(#sea6)"/><g clip-path="url(#cp6)"><g filter="url(#bl6)"><ellipse cx="263.4" cy="368.6" rx="12.8" ry="2.2" fill="#b8eeea" opacity=".7"/><ellipse cx="48.3" cy="340.4" rx="19.5" ry="3.3" fill="#3cbcc0" opacity=".7"/><ellipse cx="255.7" cy="302.7" rx="17.2" ry="3.3" fill="#48c4c6" opacity=".7"/><ellipse cx="302.3" cy="334.7" rx="7.3" ry="2.9" fill="#3cbcc0" opacity=".7"/><ellipse cx="220.1" cy="343.2" rx="7.2" ry="2.6" fill="#b8eeea" opacity=".7"/><ellipse cx="120.2" cy="319.2" rx="9.5" ry="3.2" fill="#a4e8e4" opacity=".7"/><ellipse cx="232.6" cy="365.6" rx="7.4" ry="1.6" fill="#a4e8e4" opacity=".7"/><ellipse cx="274.9" cy="379.5" rx="12.8" ry="3.6" fill="#a4e8e4" opacity=".7"/><ellipse cx="170.9" cy="347.3" rx="15.8" ry="3.5" fill="#b8eeea" opacity=".7"/><ellipse cx="210.3" cy="299.4" rx="12.0" ry="2.4" fill="#b8eeea" opacity=".7"/><ellipse cx="29.8" cy="375.6" rx="13.4" ry="1.8" fill="#3cbcc0" opacity=".7"/><ellipse cx="103.7" cy="293.5" rx="12.8" ry="1.8" fill="#a4e8e4" opacity=".7"/><ellipse cx="276.9" cy="375.1" rx="13.3" ry="2.0" fill="#a4e8e4" opacity=".7"/><ellipse cx="5.7" cy="309.9" rx="18.7" ry="3.1" fill="#3cbcc0" opacity=".7"/><ellipse cx="124.4" cy="333.3" rx="10.0" ry="3.2" fill="#48c4c6" opacity=".7"/><ellipse cx="17.9" cy="320.7" rx="16.4" ry="2.5" fill="#48c4c6" opacity=".7"/><ellipse cx="81.4" cy="387.5" rx="18.5" ry="3.2" fill="#48c4c6" opacity=".7"/><ellipse cx="148.5" cy="369.8" rx="17.1" ry="2.8" fill="#48c4c6" opacity=".7"/><ellipse cx="100.7" cy="368.0" rx="19.2" ry="2.0" fill="#3cbcc0" opacity=".7"/><ellipse cx="149.9" cy="356.7" rx="19.5" ry="1.5" fill="#b8eeea" opacity=".7"/><ellipse cx="83.4" cy="366.2" rx="8.6" ry="2.8" fill="#3cbcc0" opacity=".7"/><ellipse cx="308.0" cy="300.6" rx="11.7" ry="3.7" fill="#48c4c6" opacity=".7"/><ellipse cx="89.0" cy="327.0" rx="12.7" ry="1.9" fill="#48c4c6" opacity=".7"/><ellipse cx="164.9" cy="346.1" rx="12.5" ry="2.4" fill="#a4e8e4" opacity=".7"/><ellipse cx="322.3" cy="380.8" rx="11.3" ry="3.0" fill="#3cbcc0" opacity=".7"/><ellipse cx="214.5" cy="387.0" rx="16.2" ry="1.9" fill="#3cbcc0" opacity=".7"/><ellipse cx="185.9" cy="344.9" rx="19.5" ry="2.0" fill="#b8eeea" opacity=".7"/><ellipse cx="226.5" cy="314.5" rx="19.8" ry="2.7" fill="#b8eeea" opacity=".7"/><ellipse cx="305.2" cy="288.5" rx="9.8" ry="1.5" fill="#48c4c6" opacity=".7"/><ellipse cx="25.2" cy="297.8" rx="11.2" ry="3.9" fill="#a4e8e4" opacity=".7"/><ellipse cx="201.4" cy="287.3" rx="14.8" ry="1.7" fill="#b8eeea" opacity=".7"/><ellipse cx="15.0" cy="327.3" rx="16.1" ry="1.7" fill="#b8eeea" opacity=".7"/><ellipse cx="232.9" cy="285.2" rx="17.7" ry="1.7" fill="#3cbcc0" opacity=".7"/><ellipse cx="301.4" cy="377.2" rx="12.3" ry="3.2" fill="#a4e8e4" opacity=".7"/><ellipse cx="271.7" cy="292.7" rx="19.1" ry="2.7" fill="#48c4c6" opacity=".7"/><ellipse cx="148.4" cy="303.2" rx="16.0" ry="1.7" fill="#3cbcc0" opacity=".7"/><ellipse cx="324.7" cy="304.3" rx="19.2" ry="1.7" fill="#3cbcc0" opacity=".7"/><ellipse cx="92.9" cy="385.9" rx="12.0" ry="3.8" fill="#b8eeea" opacity=".7"/><ellipse cx="237.0" cy="299.9" rx="14.5" ry="2.1" fill="#b8eeea" opacity=".7"/><ellipse cx="245.4" cy="310.4" rx="6.4" ry="3.9" fill="#a4e8e4" opacity=".7"/><ellipse cx="232.6" cy="311.2" rx="7.1" ry="3.3" fill="#b8eeea" opacity=".7"/><ellipse cx="132.7" cy="286.3" rx="16.4" ry="3.1" fill="#a4e8e4" opacity=".7"/><ellipse cx="24.6" cy="332.4" rx="6.4" ry="2.8" fill="#a4e8e4" opacity=".7"/><ellipse cx="61.0" cy="358.7" rx="13.1" ry="3.6" fill="#a4e8e4" opacity=".7"/><ellipse cx="313.8" cy="353.5" rx="16.0" ry="1.8" fill="#a4e8e4" opacity=".7"/><ellipse cx="251.4" cy="389.2" rx="13.9" ry="1.5" fill="#48c4c6" opacity=".7"/><ellipse cx="62.5" cy="309.0" rx="11.3" ry="2.6" fill="#48c4c6" opacity=".7"/><ellipse cx="280.5" cy="333.7" rx="17.9" ry="1.8" fill="#a4e8e4" opacity=".7"/><ellipse cx="214.2" cy="366.6" rx="11.2" ry="3.2" fill="#a4e8e4" opacity=".7"/><ellipse cx="54.5" cy="345.1" rx="11.4" ry="1.7" fill="#b8eeea" opacity=".7"/><ellipse cx="156.8" cy="277.1" rx="15.1" ry="2.9" fill="#3cbcc0" opacity=".7"/><ellipse cx="197.7" cy="277.2" rx="9.1" ry="2.5" fill="#3cbcc0" opacity=".7"/><ellipse cx="30.8" cy="279.3" rx="14.0" ry="1.6" fill="#48c4c6" opacity=".7"/><ellipse cx="39.9" cy="283.5" rx="19.8" ry="1.6" fill="#b8eeea" opacity=".7"/><ellipse cx="249.0" cy="351.1" rx="16.2" ry="3.1" fill="#3cbcc0" opacity=".7"/><ellipse cx="84.9" cy="297.8" rx="17.4" ry="3.1" fill="#a4e8e4" opacity=".7"/><ellipse cx="92.2" cy="271.6" rx="13.4" ry="3.3" fill="#3cbcc0" opacity=".7"/><ellipse cx="258.0" cy="281.2" rx="14.3" ry="1.6" fill="#3cbcc0" opacity=".7"/><ellipse cx="229.5" cy="297.2" rx="16.7" ry="2.4" fill="#3cbcc0" opacity=".7"/><ellipse cx="144.6" cy="369.9" rx="6.7" ry="1.8" fill="#b8eeea" opacity=".7"/><ellipse cx="111.6" cy="328.2" rx="12.5" ry="2.2" fill="#3cbcc0" opacity=".7"/><ellipse cx="76.4" cy="285.1" rx="13.6" ry="2.1" fill="#48c4c6" opacity=".7"/><ellipse cx="326.0" cy="321.5" rx="13.2" ry="3.6" fill="#3cbcc0" opacity=".7"/><ellipse cx="84.1" cy="305.9" rx="6.5" ry="3.4" fill="#b8eeea" opacity=".7"/><ellipse cx="268.4" cy="339.1" rx="19.3" ry="3.5" fill="#a4e8e4" opacity=".7"/><ellipse cx="39.8" cy="341.1" rx="12.6" ry="3.7" fill="#48c4c6" opacity=".7"/><ellipse cx="71.5" cy="347.3" rx="11.4" ry="3.4" fill="#48c4c6" opacity=".7"/><ellipse cx="288.8" cy="372.6" rx="10.7" ry="2.1" fill="#a4e8e4" opacity=".7"/><ellipse cx="94.9" cy="340.6" rx="15.5" ry="2.1" fill="#3cbcc0" opacity=".7"/><ellipse cx="58.6" cy="318.9" rx="14.7" ry="2.1" fill="#b8eeea" opacity=".7"/></g></g><path d="M56 390 C85 355 118 322 140 306 C150 300 168 298 180 306 C205 325 238 358 262 390 Z" fill="#f4b81e"/><path d="M92 390 C110 362 130 335 146 322 C156 316 170 316 182 326 C200 345 220 368 236 390 Z" fill="#e8a412"/><path d="M140 390 C145 365 150 348 158 340 C166 334 176 338 184 350 C192 365 196 378 198 390 Z" fill="#f8c830"/><ellipse cx="166" cy="374" rx="4" ry="3" fill="#333"/><path d="M126 390 C124 360 126 338 132 328 C138 322 146 326 148 334 C150 350 150 372 148 390 Z" fill="#c88a5c"/><path d="M202 330 C206 322 214 324 216 332 C220 350 222 372 220 390 L200 390 C198 370 198 345 202 330 Z" fill="#c48656"/><path d="M46 297 L312 263" stroke="#222" stroke-width="2"/><path d="M44 292 C55 283 85 282 95 288 L96 296 C85 302 58 306 46 302 Z" fill="#c8301e"/><path d="M248 266 C265 258 295 256 310 260 L311 266 C300 270 270 272 250 275 Z" fill="#cc3a26"/><path d="M108 300 C110 292 118 284 124 282 L128 287 C124 292 120 300 120 310 C118 318 112 314 108 300 Z" fill="#c48658"/><path d="M207 276 C214 282 222 294 226 306 C224 314 218 312 216 306 C212 296 206 290 202 284 Z" fill="#c48658"/><path d="M140 287 C142 278 150 272 160 272 L166 328 L142 328 C138 315 138 298 140 287 Z" fill="#2a3450"/><path d="M150 230 C156 226 164 228 170 232 C184 242 190 262 194 290 C198 312 196 328 190 338 C180 334 170 322 164 310 C156 292 152 270 150 252 Z" fill="#6a4a30"/><path d="M160 236 C172 246 180 268 184 296 C186 312 182 318 176 306 C170 290 166 268 160 250 Z" fill="#9a7850" opacity=".7"/><g fill="none" stroke="#0c0c0c" stroke-width="4" stroke-linecap="round" stroke-linejoin="round"><path d="M65.5 52 C66 62 55 72 43.5 70.5 C30 69 22 58 23.7 46 C26 32 38 25 52 25.7 C70 26.5 95 36 118 40.8 C132 43.5 145 42 151 33"/><path d="M121 33.6 C113 38 108 48 106 72 C104 92 100 108 86 113 C72 117 58 110 54 98"/><path d="M126 96 C125 90 123 82 126 80.5 C129 79 131 84 129 88 C133 84 137 83 141 88"/><path d="M152 88 C145 85 138 92 138 101 C138 110 147 111 152 103 C154 99 155 94 156 89 C155 98 154 106 160 110"/><path d="M163 89 C167 98 172 107 177 109 C181 104 184 96 188 88"/><path d="M190 103 C202 105 215 99 214 91 C213 83 199 84 195 96 C191 108 204 115 222 108"/><path d="M222 108 C240 100 268 75 281 52 C290 36 289 25 282 29 C272 36 269 70 272 96 C274 112 290 112 300 93"/></g><text x="148" y="68" font-family="Liberation Sans" font-weight="bold" font-size="14.5" fill="#111" textLength="103" lengthAdjust="spacingAndGlyphs">Trend Research</text><text x="24" y="155" font-family="Liberation Serif" font-size="5.5" font-weight="normal" font-style="normal" fill="#5a4a6a" textLength="119.0" lengthAdjust="spacingAndGlyphs">Ocean Adventures Often Include Exploring Remote</text><text x="24" y="165.3" font-family="Liberation Serif" font-size="5.5" font-weight="normal" font-style="normal" fill="#5a4a6a" textLength="114.0" lengthAdjust="spacingAndGlyphs">Islands. These Islands Are Often Untouched And</text><text x="24" y="175.6" font-family="Liberation Serif" font-size="5.5" font-weight="normal" font-style="normal" fill="#5a4a6a" textLength="126.0" lengthAdjust="spacingAndGlyphs">Retain Their Pristine Natural Beauty. Whether It's The</text><text x="24" y="185.8" font-family="Liberation Serif" font-size="5.5" font-weight="normal" font-style="normal" fill="#5a4a6a" textLength="125.0" lengthAdjust="spacingAndGlyphs">White Sand Beaches Of The Maldives Or The Unique</text><text x="24" y="196" font-family="Liberation Serif" font-size="5.5" font-weight="normal" font-style="normal" fill="#5a4a6a" textLength="128.0" lengthAdjust="spacingAndGlyphs">Ecology Of The Galapagos Islands, Each Island Is Like</text><text x="24" y="206.3" font-family="Liberation Serif" font-size="5.5" font-weight="normal" font-style="normal" fill="#5a4a6a" textLength="55.0" lengthAdjust="spacingAndGlyphs">An Undisturbed Paradise.</text><text x="232" y="207" font-family="Liberation Serif" font-size="7" fill="#666" textLength="62" lengthAdjust="spacingAndGlyphs">BESSIE COOPER</text></svg></div>
<div class="pg" id="p7" style="left:789px;top:887px;width:332px;height:390px"><svg width="332" height="390" viewBox="0 0 332 390" style="left:0;top:0" ><defs><linearGradient id="ph7" x1="0" y1="0" x2="0" y2="1"><stop offset="0" stop-color="#7a8fd2"/><stop offset=".25" stop-color="#a6a2dc"/><stop offset=".45" stop-color="#d2b4dc"/><stop offset=".52" stop-color="#eab8d2"/><stop offset=".53" stop-color="#f3a8b4"/><stop offset=".555" stop-color="#f6a0a8"/><stop offset=".565" stop-color="#9a8c9a"/><stop offset=".62" stop-color="#a2a4c0"/><stop offset=".68" stop-color="#d2a8c0"/><stop offset=".74" stop-color="#b8a8c8"/><stop offset=".78" stop-color="#3c7e8a"/><stop offset=".82" stop-color="#c2a2c2"/><stop offset=".88" stop-color="#4a8a98"/><stop offset=".94" stop-color="#1e6070"/><stop offset="1" stop-color="#0e3a40"/></linearGradient></defs><rect x="195" y="3" width="137" height="387" fill="url(#ph7)"/><path d="M195 214 L215 212 L230 215 L250 218 L250 222 L195 222 Z" fill="#6a5a6a"/><text x="23.7" y="64.5" font-family="Liberation Sans" font-weight="bold" font-size="33" fill="#c2b2cf" textLength="116" lengthAdjust="spacingAndGlyphs">Season</text><text x="23.7" y="96" font-family="Liberation Serif" font-size="5.5" font-weight="normal" font-style="normal" fill="#8a8a8a" textLength="109.3" lengthAdjust="spacingAndGlyphs">How To Choose The Right Island For Yourself</text><text x="23.7" y="106.3" font-family="Liberation Serif" font-size="5.5" font-weight="normal" font-style="normal" fill="#8a8a8a" textLength="66.3" lengthAdjust="spacingAndGlyphs">And Travel Preparation Tips</text><text x="23.7" y="300" font-family="Liberation Serif" font-size="9" fill="#333" textLength="94" lengthAdjust="spacingAndGlyphs">Determine Your Preferences</text><text x="23.7" y="319.5" font-family="Liberation Serif" font-size="5.5" font-weight="normal" font-style="normal" fill="#8a8a8a" textLength="124.3" lengthAdjust="spacingAndGlyphs">Check The Best Time To Visit In Terms Of Weather</text><text x="23.7" y="329.7" font-family="Liberation Serif" font-size="5.5" font-weight="normal" font-style="normal" fill="#8a8a8a" textLength="124.3" lengthAdjust="spacingAndGlyphs">And Tourist Crowds. Consider What Activities You</text><text x="23.7" y="339.8" font-family="Liberation Serif" font-size="5.5" font-weight="normal" font-style="normal" fill="#8a8a8a" textLength="134.3" lengthAdjust="spacingAndGlyphs">Enjoy, Such As Snorkeling, Hiking, Or Relaxing On The</text><text x="23.7" y="349.9" font-family="Liberation Serif" font-size="5.5" font-weight="normal" font-style="normal" fill="#8a8a8a" textLength="133.3" lengthAdjust="spacingAndGlyphs">Beach. Decide Whether You Prefer A Tropical Climate</text><text x="23.7" y="360" font-family="Liberation Serif" font-size="5.5" font-weight="normal" font-style="normal" fill="#8a8a8a" textLength="62.3" lengthAdjust="spacingAndGlyphs">Or A More Temperate One.</text></svg></div>
<div class="pg" id="p9" style="left:1709px;top:887px;width:332px;height:390px"><svg width="332" height="390" viewBox="0 0 332 390" style="left:0;top:0" ><text x="98" y="59.4" font-family="Liberation Serif" font-size="8.2" font-weight="normal" font-style="normal" fill="#6a6a6a" textLength="191.0" lengthAdjust="spacingAndGlyphs">Recommended Destinations: Tetiaroa (French Polynesia),</text><text x="98" y="73.8" font-family="Liberation Serif" font-size="8.2" font-weight="normal" font-style="normal" fill="#6a6a6a" textLength="81.0" lengthAdjust="spacingAndGlyphs">Komodo Island (Indonesia)</text><text x="98" y="88.7" font-family="Liberation Serif" font-size="8.2" font-weight="normal" font-style="normal" fill="#6a6a6a" textLength="176.0" lengthAdjust="spacingAndGlyphs">Travel Plan: Sustainable Resorts Offering Eco-Tours,</text><text x="98" y="103.4" font-family="Liberation Serif" font-size="8.2" font-weight="normal" font-style="normal" fill="#6a6a6a" textLength="103.6" lengthAdjust="spacingAndGlyphs">Wildlife Conservation Programs</text><text x="98" y="117.8" font-family="Liberation Serif" font-size="8.2" font-weight="normal" font-style="normal" fill="#6a6a6a" textLength="184.7" lengthAdjust="spacingAndGlyphs">Local Highlights: Indigenous Flora And Fauna, Organic</text><text x="98" y="132.4" font-family="Liberation Serif" font-size="8.2" font-weight="normal" font-style="normal" fill="#6a6a6a" textLength="115.0" lengthAdjust="spacingAndGlyphs">Sustainable Dining Experiences</text><defs><linearGradient id="sk9" x1="0" y1="0" x2="0" y2="1"><stop offset="0" stop-color="#d6c4b6"/><stop offset="1" stop-color="#c9b2a2"/></linearGradient></defs><rect x="35" y="169" width="259" height="164" fill="url(#sk9)"/><path d="M35 290 L60 250 L80 235 L95 228 L110 230 L125 238 L135 230 L150 237 L160 250 L172 233 L182 255 L195 270 L205 296 L35 300 Z" fill="#3a3634"/><path d="M130 262 L142 240 L148 258 L160 250 L172 233 L190 268 L205 296 L130 300 Z" fill="#2e2b2a"/><path d="M282 296 L285 262 L291 252 L295 265 L294 296 Z" fill="#2e2c2c"/><path d="M35 303 L294 300 L294 333 L35 333 Z" fill="#3c3a3a"/><path d="M35 300 C100 296 150 300 210 296 C240 290 270 293 294 302 L294 310 L35 312 Z" fill="#8a8888" opacity=".8"/><ellipse cx="254" cy="308" rx="34" ry="15" fill="#4a4038"/><ellipse cx="205" cy="309" rx="14" ry="9" fill="#3a3634"/><ellipse cx="170" cy="312" rx="20" ry="8" fill="#2e2c2c"/><rect x="148" y="304" width="3" height="14" fill="#111"/></svg></div>
<div class="pg" id="p10" style="left:2169px;top:887px;width:332px;height:390px"><svg width="332" height="390" viewBox="0 0 332 390" style="left:0;top:0" ><text x="38.2" y="47.6" font-family="Liberation Serif" font-size="8.2" font-weight="normal" font-style="normal" fill="#6a6a6a" textLength="152.8" lengthAdjust="spacingAndGlyphs">Recommended Destinations: Maui (Hawaii),</text><text x="38.2" y="62.1" font-family="Liberation Serif" font-size="8.2" font-weight="normal" font-style="normal" fill="#6a6a6a" textLength="86.8" lengthAdjust="spacingAndGlyphs">Bocas del Toro (Panama)</text><text x="38.2" y="76.6" font-family="Liberation Serif" font-size="8.2" font-weight="normal" font-style="normal" fill="#6a6a6a" textLength="157.3" lengthAdjust="spacingAndGlyphs">Travel Plan: Kayaking, zip-lining, and surfing</text><text x="38.2" y="91.1" font-family="Liberation Serif" font-size="8.2" font-weight="normal" font-style="normal" fill="#6a6a6a" textLength="33.8" lengthAdjust="spacingAndGlyphs">itineraries</text><text x="38.2" y="105.6" font-family="Liberation Serif" font-size="8.2" font-weight="normal" font-style="normal" fill="#6a6a6a" textLength="161.3" lengthAdjust="spacingAndGlyphs">Local Highlights: Explore volcanic landscapes,</text><text x="38.2" y="120.1" font-family="Liberation Serif" font-size="8.2" font-weight="normal" font-style="normal" fill="#6a6a6a" textLength="122.8" lengthAdjust="spacingAndGlyphs">vibrant marine life, and surf schools</text><text x="38" y="172.6" font-family="Liberation Serif" font-weight="bold" font-size="29" fill="#080808" textLength="134" lengthAdjust="spacingAndGlyphs">Adventure</text><text x="38" y="202.4" font-family="Liberation Serif" font-weight="bold" font-size="29" fill="#080808" textLength="90" lengthAdjust="spacingAndGlyphs">Islands</text><defs><linearGradient id="sk10" x1="0" y1="0" x2="0" y2="1"><stop offset="0" stop-color="#cfd6dc"/><stop offset=".08" stop-color="#dde2e4"/><stop offset=".1" stop-color="#9ab0b4"/><stop offset=".3" stop-color="#b6c8ca"/><stop offset=".7" stop-color="#a8c2c2"/><stop offset="1" stop-color="#9cbaba"/></linearGradient><linearGradient id="in10" x1="0" y1="0" x2="0" y2="1"><stop offset="0" stop-color="#5a9c94"/><stop offset="1" stop-color="#4a9088"/></linearGradient></defs><rect x="35" y="234" width="261.5" height="126.6" fill="url(#sk10)"/><path d="M60 360.6 L80 318 L150 312 L230 316 L245 330 L240 350 L200 355 L130 352 L110 360.6 Z" fill="url(#in10)"/><path d="M35 256.5 L60 258 L80 263 L110 261 L140 260 L163 259 L200 256 L221 253 L223 262 L226.6 316 L205 317 L191 317 C187 310 184 302 178 298 C172 293 165 293 160 295 C152 298 148 304 146 309 C140 313 120 318 105 319.7 L80 316 L35 305 Z" fill="#3b3a35"/><path d="M45 275 L90 280 L140 272 L200 268 L215 280 L205 300 L150 290 L100 300 L60 298 Z" fill="#47473e" opacity=".6"/><ellipse cx="163" cy="310" rx="10" ry="13" fill="#e6ebe8" opacity=".9"/><path d="M222.7 265 C226 259 240 259 246 266 L250 271.6 L223 271.6 Z" fill="#3a3e3c"/><path d="M240 304 L243 292 L249.7 302 L249 304 Z" fill="#2c302e"/><path d="M35 303 C50 301 64 308 72 320 L73 333 L35 335 Z" fill="#b4a050"/><path d="M35 333 L73 330 L95 345 L110 360.6 L35 360.6 Z" fill="#7e604a"/><path d="M72 318 C80 314 96 313 106 318 L104 338 L92 345 L78 340 Z" fill="#2c2c2e"/><path d="M74 317 C82 312 96 312 105 318" stroke="#eef2f2" stroke-width="2.5" fill="none"/><path d="M129 360.6 L129 349.5 C160 346 210 348 237 345 L237 323.7 L243.7 321 L296.5 329 L296.5 360.6 Z" fill="#8e6650"/></svg></div>
<div class="num" style="left:444px;top:1339px">6</div>
<div class="num" style="left:905px;top:1339px">7</div>
<div class="num" style="left:1825px;top:1339px">9</div>
<div class="num" style="left:2285px;top:1339px">10</div>
<div class="pg" id="p11" style="left:329px;top:1511px;width:332px;height:394px"><svg width="332" height="394" viewBox="0 0 332 394" style="left:0;top:0" ><text x="39" y="66.8" font-family="Liberation Serif" font-weight="bold" font-size="30" fill="#b87272" textLength="107" lengthAdjust="spacingAndGlyphs">Cultural</text><text x="154" y="66.8" font-family="Liberation Serif" font-weight="bold" font-size="30" fill="#6a80b8" textLength="122" lengthAdjust="spacingAndGlyphs">Getaways</text><text x="37" y="93.8" font-family="Liberation Serif" font-size="8.2" font-weight="normal" font-style="normal" fill="#5a5a5a" textLength="206.0" lengthAdjust="spacingAndGlyphs">Recommended Destinations: Sicily (Italy), Okinawa (Japan)</text><text x="37" y="108.5" font-family="Liberation Serif" font-size="8.2" font-weight="normal" font-style="normal" fill="#5a5a5a" textLength="204.0" lengthAdjust="spacingAndGlyphs">Travel Plan: Guided tours of historical sites, local festivals</text><text x="37" y="123" font-family="Liberation Serif" font-size="8.2" font-weight="normal" font-style="normal" fill="#5a5a5a" textLength="212.0" lengthAdjust="spacingAndGlyphs">Local Highlights: Traditional art forms, culinary workshops,</text><text x="37" y="137.6" font-family="Liberation Serif" font-size="8.2" font-weight="normal" font-style="normal" fill="#5a5a5a" textLength="61.0" lengthAdjust="spacingAndGlyphs">and ancient ruins</text><defs><linearGradient id="ph11" x1="0" y1="0" x2="0" y2="1"><stop offset="0" stop-color="#b8bac8"/><stop offset="1" stop-color="#c8c4d0"/></linearGradient></defs><rect x="36" y="169" width="296" height="230" fill="url(#ph11)"/></svg></div>
<div class="pg" id="p12" style="left:789px;top:1511px;width:332px;height:394px"><svg width="332" height="394" viewBox="0 0 332 394" style="left:0;top:0" ><defs><radialGradient id="uw" cx=".3" cy=".45" r=".65"><stop offset="0" stop-color="#1f78b4"/><stop offset=".5" stop-color="#2f8cc4"/><stop offset="1" stop-color="#58aed8"/></radialGradient><filter id="bl12"><feGaussianBlur stdDeviation="1.6"/></filter><clipPath id="cp12"><rect x="22" y="0" width="310" height="394"/></clipPath></defs><g clip-path="url(#cp12)"><rect x="22" y="0" width="310" height="394" fill="url(#uw)"/><g fill="none" stroke="#dff4fc" opacity=".8" filter="url(#bl12)"><ellipse cx="106.5" cy="62.5" rx="14.7" ry="6.0" stroke-width="1.5" transform="rotate(-10 106.5 62.5)"/><ellipse cx="70.8" cy="77.0" rx="14.9" ry="9.2" stroke-width="2.6" transform="rotate(13 70.8 77.0)"/><ellipse cx="47.9" cy="41.8" rx="9.6" ry="11.3" stroke-width="1.6" transform="rotate(26 47.9 41.8)"/><ellipse cx="35.3" cy="65.3" rx="11.4" ry="7.8" stroke-width="3.2" transform="rotate(-39 35.3 65.3)"/><ellipse cx="32.8" cy="86.9" rx="13.1" ry="5.6" stroke-width="3.5" transform="rotate(36 32.8 86.9)"/><ellipse cx="42.0" cy="40.2" rx="9.4" ry="7.2" stroke-width="2.7" transform="rotate(-27 42.0 40.2)"/><ellipse cx="146.0" cy="4.9" rx="9.7" ry="10.7" stroke-width="2.3" transform="rotate(-6 146.0 4.9)"/><ellipse cx="128.1" cy="45.3" rx="11.8" ry="5.2" stroke-width="3.0" transform="rotate(37 128.1 45.3)"/><ellipse cx="195.8" cy="63.0" rx="11.6" ry="7.5" stroke-width="2.9" transform="rotate(14 195.8 63.0)"/><ellipse cx="42.3" cy="22.3" rx="11.6" ry="8.6" stroke-width="3.1" transform="rotate(0 42.3 22.3)"/><ellipse cx="27.0" cy="78.1" rx="12.3" ry="8.6" stroke-width="1.9" transform="rotate(-6 27.0 78.1)"/><ellipse cx="91.1" cy="73.3" rx="9.0" ry="8.8" stroke-width="1.9" transform="rotate(16 91.1 73.3)"/><ellipse cx="28.6" cy="26.3" rx="11.4" ry="9.5" stroke-width="1.6" transform="rotate(-3 28.6 26.3)"/><ellipse cx="59.2" cy="26.8" rx="12.8" ry="11.7" stroke-width="2.5" transform="rotate(36 59.2 26.8)"/><ellipse cx="51.8" cy="87.8" rx="11.6" ry="6.3" stroke-width="3.0" transform="rotate(33 51.8 87.8)"/><ellipse cx="23.2" cy="25.5" rx="15.7" ry="7.4" stroke-width="2.0" transform="rotate(-39 23.2 25.5)"/><ellipse cx="29.1" cy="58.8" rx="17.8" ry="12.0" stroke-width="2.5" transform="rotate(-38 29.1 58.8)"/><ellipse cx="79.4" cy="74.8" rx="16.3" ry="9.5" stroke-width="2.0" transform="rotate(2 79.4 74.8)"/><ellipse cx="107.0" cy="59.6" rx="10.6" ry="11.6" stroke-width="3.3" transform="rotate(-27 107.0 59.6)"/><ellipse cx="73.9" cy="83.0" rx="10.8" ry="11.6" stroke-width="2.5" transform="rotate(16 73.9 83.0)"/><ellipse cx="147.4" cy="20.3" rx="10.9" ry="6.8" stroke-width="2.9" transform="rotate(16 147.4 20.3)"/><ellipse cx="45.4" cy="84.2" rx="12.2" ry="6.7" stroke-width="2.4" transform="rotate(38 45.4 84.2)"/><ellipse cx="121.7" cy="59.4" rx="17.2" ry="11.7" stroke-width="3.0" transform="rotate(-7 121.7 59.4)"/><ellipse cx="126.7" cy="85.6" rx="15.9" ry="9.1" stroke-width="2.2" transform="rotate(-11 126.7 85.6)"/><ellipse cx="153.0" cy="53.5" rx="8.2" ry="10.0" stroke-width="3.3" transform="rotate(24 153.0 53.5)"/><ellipse cx="181.8" cy="86.5" rx="13.3" ry="10.5" stroke-width="2.3" transform="rotate(-32 181.8 86.5)"/><ellipse cx="84.9" cy="29.7" rx="17.3" ry="9.8" stroke-width="2.6" transform="rotate(10 84.9 29.7)"/><ellipse cx="44.2" cy="50.8" rx="15.0" ry="7.8" stroke-width="2.0" transform="rotate(-7 44.2 50.8)"/><ellipse cx="79.6" cy="65.1" rx="9.4" ry="5.6" stroke-width="2.1" transform="rotate(16 79.6 65.1)"/><ellipse cx="157.2" cy="62.6" rx="17.3" ry="7.6" stroke-width="1.6" transform="rotate(-1 157.2 62.6)"/><ellipse cx="101.0" cy="17.0" rx="14.7" ry="7.4" stroke-width="2.0" transform="rotate(-14 101.0 17.0)"/><ellipse cx="190.0" cy="0.7" rx="11.6" ry="7.0" stroke-width="1.9" transform="rotate(-5 190.0 0.7)"/><ellipse cx="61.2" cy="87.3" rx="13.0" ry="9.9" stroke-width="1.8" transform="rotate(-3 61.2 87.3)"/><ellipse cx="130.0" cy="80.1" rx="10.5" ry="8.2" stroke-width="3.2" transform="rotate(27 130.0 80.1)"/><ellipse cx="62.5" cy="51.1" rx="15.6" ry="7.8" stroke-width="2.8" transform="rotate(13 62.5 51.1)"/><ellipse cx="195.1" cy="52.6" rx="14.8" ry="7.5" stroke-width="3.0" transform="rotate(-14 195.1 52.6)"/><ellipse cx="111.0" cy="34.3" rx="11.1" ry="6.0" stroke-width="2.0" transform="rotate(4 111.0 34.3)"/><ellipse cx="66.8" cy="4.4" rx="16.0" ry="7.0" stroke-width="3.4" transform="rotate(8 66.8 4.4)"/><ellipse cx="91.3" cy="82.9" rx="17.0" ry="7.2" stroke-width="1.8" transform="rotate(11 91.3 82.9)"/><ellipse cx="172.0" cy="57.8" rx="15.8" ry="7.9" stroke-width="2.7" transform="rotate(-19 172.0 57.8)"/><ellipse cx="94.4" cy="36.1" rx="11.8" ry="7.8" stroke-width="3.1" transform="rotate(-26 94.4 36.1)"/><ellipse cx="58.5" cy="24.2" rx="17.7" ry="8.7" stroke-width="1.6" transform="rotate(27 58.5 24.2)"/><ellipse cx="177.5" cy="78.0" rx="11.6" ry="10.1" stroke-width="2.1" transform="rotate(-29 177.5 78.0)"/><ellipse cx="176.0" cy="79.1" rx="10.1" ry="11.2" stroke-width="1.5" transform="rotate(-15 176.0 79.1)"/><ellipse cx="24.3" cy="16.2" rx="9.6" ry="10.0" stroke-width="2.1" transform="rotate(-25 24.3 16.2)"/><ellipse cx="54.8" cy="94.3" rx="16.6" ry="9.2" stroke-width="1.7" transform="rotate(15 54.8 94.3)"/><ellipse cx="117.5" cy="109.3" rx="13.3" ry="9.6" stroke-width="3.1" transform="rotate(0 117.5 109.3)"/><ellipse cx="135.1" cy="111.4" rx="14.3" ry="7.7" stroke-width="2.3" transform="rotate(1 135.1 111.4)"/><ellipse cx="149.3" cy="90.6" rx="17.2" ry="8.4" stroke-width="3.2" transform="rotate(15 149.3 90.6)"/><ellipse cx="192.2" cy="135.1" rx="12.3" ry="7.8" stroke-width="2.7" transform="rotate(20 192.2 135.1)"/><ellipse cx="171.4" cy="74.2" rx="8.6" ry="5.8" stroke-width="1.7" transform="rotate(-35 171.4 74.2)"/><ellipse cx="23.5" cy="87.4" rx="9.1" ry="9.8" stroke-width="2.7" transform="rotate(37 23.5 87.4)"/><ellipse cx="193.0" cy="142.1" rx="17.5" ry="5.2" stroke-width="2.0" transform="rotate(34 193.0 142.1)"/><ellipse cx="106.6" cy="82.7" rx="15.6" ry="8.0" stroke-width="2.6" transform="rotate(-15 106.6 82.7)"/><ellipse cx="65.0" cy="69.6" rx="14.1" ry="11.7" stroke-width="3.5" transform="rotate(21 65.0 69.6)"/><ellipse cx="188.1" cy="99.8" rx="11.0" ry="11.5" stroke-width="2.7" transform="rotate(14 188.1 99.8)"/><ellipse cx="24.2" cy="85.1" rx="12.8" ry="10.1" stroke-width="3.2" transform="rotate(21 24.2 85.1)"/><ellipse cx="82.5" cy="102.0" rx="16.6" ry="11.9" stroke-width="2.5" transform="rotate(-24 82.5 102.0)"/><ellipse cx="133.1" cy="119.0" rx="11.6" ry="6.6" stroke-width="2.3" transform="rotate(9 133.1 119.0)"/><ellipse cx="44.6" cy="119.5" rx="17.5" ry="10.2" stroke-width="2.0" transform="rotate(-7 44.6 119.5)"/></g><ellipse cx="75" cy="115" rx="40" ry="45" fill="#1a6aa8" opacity=".45" filter="url(#bl12)"/><g fill="#c8ecfa" opacity=".75"><circle cx="38.2" cy="179.5" r="1.1"/><circle cx="43.8" cy="171.9" r="1.0"/><circle cx="76.2" cy="165.1" r="0.8"/><circle cx="58.4" cy="189.9" r="0.8"/><circle cx="70.2" cy="168.4" r="0.7"/><circle cx="62.0" cy="158.2" r="0.8"/><circle cx="59.4" cy="164.0" r="1.3"/><circle cx="53.7" cy="163.3" r="1.1"/><circle cx="61.8" cy="170.6" r="1.1"/><circle cx="35.9" cy="176.9" r="0.6"/><circle cx="50.0" cy="182.4" r="1.4"/><circle cx="83.9" cy="156.9" r="0.9"/><circle cx="52.6" cy="183.6" r="0.7"/><circle cx="45.7" cy="175.5" r="1.1"/><circle cx="77.2" cy="169.2" r="1.4"/><circle cx="66.7" cy="187.5" r="0.9"/><circle cx="67.2" cy="164.4" r="1.1"/><circle cx="90.1" cy="159.6" r="1.0"/><circle cx="88.1" cy="170.1" r="1.1"/><circle cx="79.3" cy="178.6" r="0.8"/><circle cx="54.5" cy="151.0" r="1.3"/><circle cx="93.2" cy="165.6" r="1.4"/><circle cx="102.2" cy="156.1" r="1.3"/><circle cx="63.7" cy="162.6" r="0.7"/><circle cx="63.1" cy="152.1" r="0.5"/><circle cx="39.3" cy="162.3" r="0.6"/><circle cx="39.7" cy="183.3" r="0.8"/><circle cx="69.2" cy="174.1" r="1.3"/><circle cx="41.7" cy="159.1" r="1.3"/><circle cx="102.8" cy="187.3" r="1.0"/></g><path d="M332 10 C310 12 285 22 270 32 C250 30 232 40 222 50 C205 55 195 70 188 85 C170 95 160 105 156 120 C150 135 152 150 160 160 L162 194 L332 194 Z" fill="#0f1316"/><path d="M230 40 C222 28 240 18 250 30 M200 60 C190 50 205 40 215 52 M160 120 C150 112 152 100 162 105" stroke="#0f1316" stroke-width="4" fill="none"/><path d="M200 161 C215 158 235 160 250 165 L250 194 L198 194 Z" fill="#a04a50" opacity=".8"/><path d="M163 88 C180 83 205 82 220 86 L262 92 L262 120 L214 118 C212 130 205 138 195 140 L172 140 C164 138 161 130 161 120 Z" fill="#d2d43c"/><path d="M170 94 C185 90 200 90 213 93 L210 124 C206 132 198 135 190 135 L175 134 C169 132 168 126 168 118 Z" fill="#2a3444"/><path d="M186 110 C195 106 205 108 212 112" stroke="#b06a5a" stroke-width="3" fill="none" opacity=".6"/><g fill="none" stroke="#bfe6f6" stroke-width="1" opacity=".85"><circle cx="211.5" cy="87.6" r="3.3"/><circle cx="229.4" cy="131.2" r="3.1"/><circle cx="206.7" cy="129.0" r="3.3"/><circle cx="199.9" cy="139.1" r="1.9"/><circle cx="232.7" cy="165.7" r="2.8"/><circle cx="214.6" cy="67.6" r="2.5"/><circle cx="211.2" cy="113.0" r="1.7"/><circle cx="236.4" cy="127.6" r="2.6"/><circle cx="232.9" cy="172.6" r="2.6"/><circle cx="219.5" cy="166.6" r="2.2"/><circle cx="235.5" cy="67.9" r="3.1"/><circle cx="218.7" cy="139.7" r="3.5"/><circle cx="204.9" cy="113.9" r="3.1"/><circle cx="228.6" cy="127.9" r="3.1"/><circle cx="225.5" cy="169.3" r="2.8"/><circle cx="211.3" cy="99.4" r="1.7"/><circle cx="200.5" cy="70.1" r="3.5"/><circle cx="201.3" cy="137.3" r="1.8"/><circle cx="238.5" cy="128.9" r="1.9"/><circle cx="232.2" cy="168.2" r="3.5"/><circle cx="205.1" cy="113.3" r="2.8"/><circle cx="207.7" cy="133.3" r="2.9"/></g></g></svg></div>
<div class="pg" id="p14" style="left:1709px;top:1563px;width:332px;height:300px"><svg width="332" height="300" viewBox="0 0 332 300" style="left:0;top:0" ><text x="145" y="32.4" font-family="Liberation Serif" font-size="8.2" font-weight="normal" font-style="normal" fill="#6a6a6a" textLength="160.0" lengthAdjust="spacingAndGlyphs">Recommended Destinations: Crete (Greece), Mauritius</text><defs><linearGradient id="ph14" x1="0" y1="0" x2="1" y2="0"><stop offset="0" stop-color="#c07060"/><stop offset=".42" stop-color="#d8a0a0"/><stop offset=".5" stop-color="#b8d0e8"/><stop offset=".62" stop-color="#3a7ab8"/><stop offset=".66" stop-color="#e8d0c0"/><stop offset=".72" stop-color="#caa898"/><stop offset=".77" stop-color="#2a5a8a"/><stop offset=".82" stop-color="#8a5878"/><stop offset=".88" stop-color="#a04a90"/><stop offset=".93" stop-color="#c08a3a"/><stop offset="1" stop-color="#d0a040"/></linearGradient></defs><rect x="0" y="59" width="315" height="250" fill="url(#ph14)"/></svg></div>
<div class="pg" id="p15" style="left:2169px;top:1597px;width:332px;height:234px"><svg width="332" height="234" viewBox="0 0 332 234" style="left:0;top:0" ><rect x="22" y="20.5" width="17.6" height="27" fill="#5ed49a"/><rect x="40" y="20.5" width="24" height="27" fill="#7a8a70"/><circle cx="52" cy="30" r="5" fill="#e0a060"/><rect x="44" y="38" width="18" height="9" fill="#3a3a3a"/><rect x="67" y="20.5" width="13" height="27" fill="#a89af8"/><rect x="80" y="20.5" width="29" height="27" fill="#b8b8b8"/><rect x="22" y="50.5" width="28" height="28" fill="#c8c8c8"/><rect x="50" y="50.5" width="14" height="28" fill="#a89af8"/><rect x="67" y="50.5" width="27" height="28" fill="#6a7a60"/><rect x="94" y="50.5" width="15" height="28" fill="#5ed49a"/><circle cx="88" cy="62" r="4" fill="#d09080"/><rect x="130.8" y="22.7" width="16.8" height="16" fill="#fde040"/><path d="M116 32 H130 M139 39 V55" stroke="#a8eec0" stroke-width="0.8"/><text x="171" y="27" font-family="Liberation Serif" font-style="italic" font-size="8" fill="#222" textLength="62" lengthAdjust="spacingAndGlyphs">Math Presentation</text><text x="171.0" y="36.04" font-family="Liberation Sans" font-size="2.88" fill="#999" opacity="0.8" textLength="112.0" lengthAdjust="spacingAndGlyphs">gnetic Field Is Like A Huge And Invisible Protective Shield, Playing A Vital Role</text><text x="171.0" y="43.54" font-family="Liberation Sans" font-size="2.88" fill="#999" opacity="0.8" textLength="114.0" lengthAdjust="spacingAndGlyphs">n The Cosmic Environment. It Effectively Resists Most Of The Various Types Of Rays I</text><text x="171.0" y="50.54" font-family="Liberation Sans" font-size="2.88" fill="#999" opacity="0.8" textLength="112.0" lengthAdjust="spacingAndGlyphs">The Universe, Such As High-Energy Charged Particle Flows. If These Rays Reach The</text><text x="171.0" y="62.54" font-family="Liberation Sans" font-size="2.88" fill="#999" opacity="0.8" textLength="114.0" lengthAdjust="spacingAndGlyphs">Earth Without Obstruction, They Will Cause A Devastating Blow To Life On Earth. Once</text><text x="171.0" y="69.64" font-family="Liberation Sans" font-size="2.88" fill="#999" opacity="0.8" textLength="111.0" lengthAdjust="spacingAndGlyphs">The Earth Loses Its Magnetic Field, The Creatures On The Earth's Surface, Whether</text><circle cx="293" cy="27" r="7" fill="#f8c030"/><path d="M278 16 C285 10 295 14 302 12" stroke="#f080c0" stroke-width="0.8" fill="none"/><path d="M303.8 40 V240" stroke="#a8eec0" stroke-width="0.8"/><path d="M81 88 C100 75 130 82 150 76 C175 72 200 80 220 76 C240 74 250 80 248 90 L80 92 Z" fill="#c8f47a"/><text x="82" y="100" font-family="Liberation Serif" font-weight="bold" font-size="20" fill="#111" textLength="125" lengthAdjust="spacingAndGlyphs">Skill Training</text><text x="27.5" y="37.5" font-family="Liberation Sans" font-weight="bold" font-size="5" fill="#111">01</text><text x="71" y="36.5" font-family="Liberation Sans" font-weight="bold" font-size="5" fill="#111">02</text><text x="52.5" y="67.5" font-family="Liberation Sans" font-weight="bold" font-size="5" fill="#111">03</text><text x="97.5" y="67.5" font-family="Liberation Sans" font-weight="bold" font-size="5" fill="#111">04</text><text x="133.5" y="33.5" font-family="Liberation Sans" font-weight="bold" font-size="5" fill="#111">idea</text></svg></div>
</div>

<!-- DIALOG -->
<div class="a" id="dlg" style="left:1027px;top:40px;width:812px;height:1700px;background:#333235;border:2px solid #545458;border-radius:14px"></div>
<div class="t" id="tx-title" style="left:1061px;top:73px;font-size:23px;letter-spacing:0.45px">Configurações do tamanho da página</div>
<svg style="left:0;top:0" width="10" height="10"><path d="M1786.5 71 L1809.5 94 M1809.5 71 L1786.5 94" stroke="#fff" stroke-width="2.2"/></svg>
<div class="a" style="left:1029px;top:122px;width:808px;height:1.5px;background:#3b3b3e"></div>
<!-- preview -->
<div class="pg" id="prev" style="left:1234px;top:173px;width:398px;height:564px;border-radius:15px"><svg width="400" height="276.6" viewBox="0 0 332 234" preserveAspectRatio="none" style="left:-1px;top:143.9px"><text x="21" y="32.4" font-family="Liberation Serif" font-weight="bold" font-size="13.6" fill="#5a5ad9" textLength="96" lengthAdjust="spacingAndGlyphs">Formation Of The</text><text x="20" y="49.8" font-family="Liberation Serif" font-style="italic" font-size="13.6" fill="#6c6ce0" textLength="110" lengthAdjust="spacingAndGlyphs">Earth’s Magnetic Field</text><g fill="none" stroke="#b4b4dc" stroke-width="0.55"><ellipse cx="85" cy="112" rx="73" ry="47" opacity="0.35"/><ellipse cx="85" cy="112" rx="62" ry="40" opacity="0.5"/><ellipse cx="85" cy="112" rx="50" ry="33" opacity="0.7"/><ellipse cx="85" cy="112" rx="38" ry="26" opacity="0.8"/><ellipse cx="85" cy="112" rx="27" ry="20" opacity="0.9"/><ellipse cx="85" cy="112" rx="19" ry="16" opacity="1"/></g><circle cx="85" cy="112" r="15" fill="#f6f6fd" stroke="#a8a8dc" stroke-width="0.6"/><path d="M86.5 102 L88 110 L83 123 L85 113 Z" fill="#6a6ae0"/><path d="M91 96 L100 70 M80 128 L70 150" stroke="#8888cc" stroke-width="0.6" fill="none"/><text x="108.0" y="75.95" font-family="Liberation Sans" font-size="2.64" fill="#8888d8" opacity="1.0" textLength="17.0" lengthAdjust="spacingAndGlyphs">ectively Resi</text><text x="108.0" y="79.45" font-family="Liberation Sans" font-size="2.64" fill="#8888d8" opacity="1.0" textLength="14.0" lengthAdjust="spacingAndGlyphs">ts Most Of</text><text x="48.0" y="148.95" font-family="Liberation Sans" font-size="2.64" fill="#7878c8" opacity="1.0" textLength="15.0" lengthAdjust="spacingAndGlyphs">he Various T</text><text x="48.0" y="152.95" font-family="Liberation Sans" font-size="2.64" fill="#7878c8" opacity="1.0" textLength="14.0" lengthAdjust="spacingAndGlyphs">pes Of Rays</text><text x="80.0" y="150.95" font-family="Liberation Sans" font-size="2.64" fill="#7878c8" opacity="1.0" textLength="12.0" lengthAdjust="spacingAndGlyphs">In The Un</text><text x="80.0" y="154.95" font-family="Liberation Sans" font-size="2.64" fill="#7878c8" opacity="1.0" textLength="13.0" lengthAdjust="spacingAndGlyphs">verse, Suc</text><text x="80.0" y="158.45" font-family="Liberation Sans" font-size="2.64" fill="#7878c8" opacity="1.0" textLength="7.0" lengthAdjust="spacingAndGlyphs">As H</text><text x="73.0" y="66.86" font-family="Liberation Sans" font-size="2.40" fill="#b0b0e8" opacity="1.0" textLength="17.0" lengthAdjust="spacingAndGlyphs">gh-Energy Charg</text><text x="73.0" y="70.36" font-family="Liberation Sans" font-size="2.40" fill="#b0b0e8" opacity="1.0" textLength="19.0" lengthAdjust="spacingAndGlyphs">d Particle Flows</text><defs><linearGradient id="lg698935572"><stop offset="0" stop-color="#7c7cf0"/><stop offset="1" stop-color="#c8c8fa"/></linearGradient></defs><rect x="169" y="20" width="45" height="8" fill="url(#lg698935572)"/><text x="171.5" y="25.76" font-family="Liberation Sans" font-size="5.60" font-weight="bold" fill="#fff" opacity=".9" textLength="36.9" lengthAdjust="spacingAndGlyphs">Magnetic Field</text><text x="169.0" y="35.80" font-family="Liberation Sans" font-size="3.60" fill="#8282de" opacity="1.0" textLength="121.0" lengthAdjust="spacingAndGlyphs">If These Rays Reach The Earth Without Obstruction, They Will Cause A D</text><text x="169.0" y="44.00" font-family="Liberation Sans" font-size="3.60" fill="#8282de" opacity="1.0" textLength="125.0" lengthAdjust="spacingAndGlyphs">vastating Blow To Life On Earth. Once The Earth Loses Its Magnetic Field,</text><text x="169.0" y="51.90" font-family="Liberation Sans" font-size="3.60" fill="#8282de" opacity="1.0" textLength="116.0" lengthAdjust="spacingAndGlyphs">The Creatures On The Earth's Surface, Whether Complex Plants And Ani</text><text x="169.0" y="60.10" font-family="Liberation Sans" font-size="3.60" fill="#8282de" opacity="1.0" textLength="39.0" lengthAdjust="spacingAndGlyphs">als Or Tiny Microorgani</text><circle cx="171.5" cy="82" r="3.5" fill="#ececfa" stroke="#b8b8e8" stroke-width="0.4"/><rect x="171.2" y="95" width="0.6" height="6" fill="#c0c0e0"/><rect x="167.5" y="104.5" width="8" height="1.2" fill="#b8b8e4"/><circle cx="187" cy="82" r="5" fill="#dcdcf6" stroke="#b8b8e8" stroke-width="0.4"/><rect x="186.7" y="95" width="0.6" height="6" fill="#c0c0e0"/><rect x="183" y="104.5" width="8" height="1.2" fill="#b8b8e4"/><circle cx="206" cy="82" r="6.5" fill="#c4c4f4" stroke="#b8b8e8" stroke-width="0.4"/><rect x="205.7" y="95" width="0.6" height="6" fill="#c0c0e0"/><rect x="202" y="104.5" width="8" height="1.2" fill="#b8b8e4"/><circle cx="229" cy="82" r="8" fill="#a8a8f0" stroke="#b8b8e8" stroke-width="0.4"/><rect x="228.7" y="95" width="0.6" height="6" fill="#c0c0e0"/><rect x="225" y="104.5" width="8" height="1.2" fill="#b8b8e4"/><circle cx="252" cy="82" r="6.5" fill="#bcbcf2" stroke="#b8b8e8" stroke-width="0.4"/><rect x="251.7" y="95" width="0.6" height="6" fill="#c0c0e0"/><rect x="248" y="104.5" width="8" height="1.2" fill="#b8b8e4"/><circle cx="272" cy="82" r="5" fill="#dcdcf0" stroke="#b8b8e8" stroke-width="0.4"/><rect x="271.7" y="95" width="0.6" height="6" fill="#c0c0e0"/><rect x="268" y="104.5" width="8" height="1.2" fill="#b8b8e4"/><circle cx="292.5" cy="82" r="3.5" fill="#eeeefa" stroke="#b8b8e8" stroke-width="0.4"/><rect x="292.2" y="95" width="0.6" height="6" fill="#c0c0e0"/><rect x="288.5" y="104.5" width="8" height="1.2" fill="#b8b8e4"/><ellipse cx="229" cy="82" rx="12" ry="3" fill="none" stroke="#7c7ce8" stroke-width="0.7" transform="rotate(30 229 82)"/><defs><linearGradient id="lg51847156"><stop offset="0" stop-color="#7c7cf0"/><stop offset="1" stop-color="#c8c8fa"/></linearGradient></defs><rect x="169" y="121.4" width="55" height="8" fill="url(#lg51847156)"/><text x="171.5" y="127.16" font-family="Liberation Sans" font-size="5.60" font-weight="bold" fill="#fff" opacity=".9" textLength="45.1" lengthAdjust="spacingAndGlyphs">Magnetic Field</text><text x="169.0" y="137.30" font-family="Liberation Sans" font-size="3.60" fill="#8282de" opacity="1.0" textLength="119.0" lengthAdjust="spacingAndGlyphs">ms, Will Find It Difficult To Survive Under The Radiation Of Strong Ra</text><text x="169.0" y="145.80" font-family="Liberation Sans" font-size="3.60" fill="#8282de" opacity="1.0" textLength="118.0" lengthAdjust="spacingAndGlyphs">s And Will Quickly Go To Extinction. At The Same Time, The Atmosphere</text><text x="169.0" y="153.90" font-family="Liberation Sans" font-size="3.60" fill="#8282de" opacity="1.0" textLength="126.0" lengthAdjust="spacingAndGlyphs">Will Also Lose The Protection Of The Magnetic Field And Be Gradually Strip</text><text x="169.0" y="161.90" font-family="Liberation Sans" font-size="3.60" fill="#8282de" opacity="1.0" textLength="126.0" lengthAdjust="spacingAndGlyphs">ed Away By Forces Such As The Solar Wind, And Eventually Disappear. It Can</text><text x="169.0" y="169.80" font-family="Liberation Sans" font-size="3.60" fill="#8282de" opacity="1.0" textLength="99.0" lengthAdjust="spacingAndGlyphs">Be Said That The Earth's Magnetic Field Provides An Indisp</text><defs><linearGradient id="lg77777868"><stop offset="0" stop-color="#7c7cf0"/><stop offset="1" stop-color="#c8c8fa"/></linearGradient></defs><rect x="22" y="177" width="29.5" height="8" fill="url(#lg77777868)"/><text x="24.5" y="182.76" font-family="Liberation Sans" font-size="5.60" font-weight="bold" fill="#fff" opacity=".9" textLength="24.2" lengthAdjust="spacingAndGlyphs">Magnetic Field</text><text x="22.0" y="194.80" font-family="Liberation Sans" font-size="3.60" fill="#8282de" opacity="1.0" textLength="179.0" lengthAdjust="spacingAndGlyphs">nsable Guarantee For The Reproduction Of Life On Earth And The Stable Existence Of The Atmosphere By Shie</text><text x="22.0" y="202.90" font-family="Liberation Sans" font-size="3.60" fill="#8282de" opacity="1.0" textLength="172.0" lengthAdjust="spacingAndGlyphs">ding Dangerous Substances Such As Solar Particles. The Earth's Magnetic Field Is Like A Huge And Invi</text><text x="22.0" y="210.90" font-family="Liberation Sans" font-size="3.60" fill="#8282de" opacity="1.0" textLength="175.0" lengthAdjust="spacingAndGlyphs">ble Protective Shield, Playing A Vital Role In The Cosmic Environment. It Effectively Resists Most Of T</text><text x="22.0" y="219.00" font-family="Liberation Sans" font-size="3.60" fill="#8282de" opacity="1.0" textLength="172.0" lengthAdjust="spacingAndGlyphs">e Various Types Of Rays In The Universe, Such As High-Energy Charged Particle Flows. If These Rays Re</text></svg></div>
<div class="t" id="tx-cur" style="left:1224px;top:745px;font-size:24px;letter-spacing:-0.62px"><b>Tamanho atual:</b> W 20.99cm <span style="color:#7d7d80">x</span> H 29.70cm</div>

<div class="t" id="tx-tam" style="left:1077px;top:825px;font-size:24.5px;font-weight:bold;letter-spacing:-0.95px">Tam. da página <span style="color:#8a8a8c">(cm)</span></div>
<svg style="left:0;top:0" width="10" height="10"><path d="M1774.49 829.48 A18.2 18.2 0 0 1 1774.49 839.52 Q1765.83 839.60 1770.09 847.14 L1770.09 847.14 A18.2 18.2 0 0 1 1761.40 852.16 Q1757.00 844.70 1752.60 852.16 L1752.60 852.16 A18.2 18.2 0 0 1 1743.91 847.14 Q1748.17 839.60 1739.51 839.52 L1739.51 839.52 A18.2 18.2 0 0 1 1739.51 829.48 Q1748.17 829.40 1743.91 821.86 L1743.91 821.86 A18.2 18.2 0 0 1 1752.60 816.84 Q1757.00 824.30 1761.40 816.84 L1761.40 816.84 A18.2 18.2 0 0 1 1770.09 821.86 Q1765.83 829.40 1774.49 829.48 Z" fill="none" stroke="#fff" stroke-width="2.2" stroke-linejoin="round"/><circle cx="1757" cy="834.5" r="5.2" fill="none" stroke="#fff" stroke-width="2.2"/></svg>
<div class="a" style="left:1078px;top:883px;width:710px;height:63px;background:#222125;border:2px solid #38383b;border-radius:14px"></div>
<div class="t" id="tx-a4" style="left:1095px;top:905px;font-size:24px">A4</div>
<svg style="left:0;top:0" width="10" height="10"><path d="M1748.5 911 L1755 917.5 L1761.5 911" fill="none" stroke="#fff" stroke-width="2"/></svg>

<div class="t" id="tx-w" style="left:1095px;top:975px;font-size:39px;font-weight:normal;color:#fff;transform:scaleX(0.74);transform-origin:left">W</div>
<div class="a" style="left:1141px;top:963px;width:279px;height:64px;background:#404043;border:2px solid #4a4a4d;border-radius:14px"></div>
<div class="t" id="tx-wv" style="left:1163px;top:984px;font-size:24px;color:#6c6c6f">20.99</div>
<svg style="left:0;top:0" width="10" height="10"><path d="M1381 988 L1387 982 L1393 988 M1381 1002 L1387 1008 L1393 1002" fill="none" stroke="#6c6c6f" stroke-width="2"/></svg>
<div class="t" id="tx-h" style="left:1464px;top:975px;font-size:39px;color:#fff;transform:scaleX(0.86);transform-origin:left">H</div>
<div class="a" style="left:1510px;top:963px;width:279px;height:64px;background:#404043;border:2px solid #4a4a4d;border-radius:14px"></div>
<div class="t" id="tx-hv" style="left:1531px;top:984px;font-size:24px;color:#6c6c6f">29.70</div>
<svg style="left:0;top:0" width="10" height="10"><path d="M1749 988 L1755 982 L1761 988 M1749 1002 L1755 1008 L1761 1002" fill="none" stroke="#6c6c6f" stroke-width="2"/></svg>

<div class="t" id="tx-ori" style="left:1078px;top:1080px;font-size:24px;font-weight:bold">Orientação</div>
<div class="a" style="left:1077px;top:1140px;width:340px;height:79px;background:#46456b;border:2px solid #7c7cf2;border-radius:12px"></div>
<div class="t" id="tx-ret" style="left:1094px;top:1169px;font-size:24px;font-weight:bold;color:#e0e0e6">Retrato</div>
<svg style="left:0;top:0" width="10" height="10"><path d="M1359 1159.5 H1374 L1384.5 1170 V1193 a5.5 5.5 0 0 1 -5.5 5.5 H1359 a5.5 5.5 0 0 1 -5.5 -5.5 V1165 a5.5 5.5 0 0 1 5.5 -5.5 Z" fill="none" stroke="#fff" stroke-width="2.2"/><path d="M1374 1160 V1166 a4 4 0 0 0 4 4 H1384" fill="#fff" stroke="#fff" stroke-width="2"/></svg>
<div class="a" style="left:1450px;top:1140px;width:338px;height:79px;background:#232225;border:2px solid #363639;border-radius:12px"></div>
<div class="t" id="tx-pai" style="left:1465px;top:1169px;font-size:24px;font-weight:bold;color:#e0e0e6;letter-spacing:-0.85px">Paisagem</div>
<svg style="left:0;top:0" width="10" height="10"><path d="M1727 1163.5 H1755 a5.5 5.5 0 0 1 5.5 5.5 V1185 L1750 1195 H1727 a5.5 5.5 0 0 1 -5.5 -5.5 V1169 a5.5 5.5 0 0 1 5.5 -5.5 Z" fill="none" stroke="#fff" stroke-width="2.2"/><path d="M1760 1185 H1754 a4 4 0 0 0 -4 4 V1195" fill="#fff" stroke="#fff" stroke-width="2"/></svg>

<div class="a" style="left:1077px;top:1251px;width:712px;height:2px;background:#48484b"></div>
<div class="t" id="tx-int" style="left:1077px;top:1307px;font-size:24px;font-weight:bold;letter-spacing:-0.33px">Intervalo de páginas</div>
<svg style="left:0;top:0" width="10" height="10"><path d="M1755 1334 H1748 a6 6 0 0 1 -6 -6 V1305 a6 6 0 0 1 6 -6 H1764 a6 6 0 0 1 6 6 V1316" fill="none" stroke="#fff" stroke-width="2.2"/><path d="M1749 1307 H1761 M1749 1314 H1756" stroke="#fff" stroke-width="2.2"/><path d="M1752 1327.5 H1775 M1757 1322.5 L1752 1327.5 L1757 1332.5 M1770 1322.5 L1775 1327.5 L1770 1332.5" fill="none" stroke="#fff" stroke-width="2"/></svg>
<div class="a" style="left:1078px;top:1366px;width:710px;height:150px;background:#222125;border:2px solid #38383b;border-radius:14px"></div>
<div class="t" id="tx-2" style="left:1095px;top:1389px;font-size:24px">2</div>
<div class="a" style="left:1229px;top:1613px;width:272px;height:64px;background:#7b7bfa;border-radius:14px"></div>
<div class="t" id="tx-ok" style="left:1348px;top:1635px;font-size:24px;letter-spacing:-1px">OK</div>
<div class="a" style="left:1517px;top:1613px;width:272px;height:64px;background:#434345;border-radius:14px"></div>
<div class="t" id="tx-can" style="left:1607px;top:1635px;font-size:24px;letter-spacing:-0.5px">Cancelar</div>
</body></html>
